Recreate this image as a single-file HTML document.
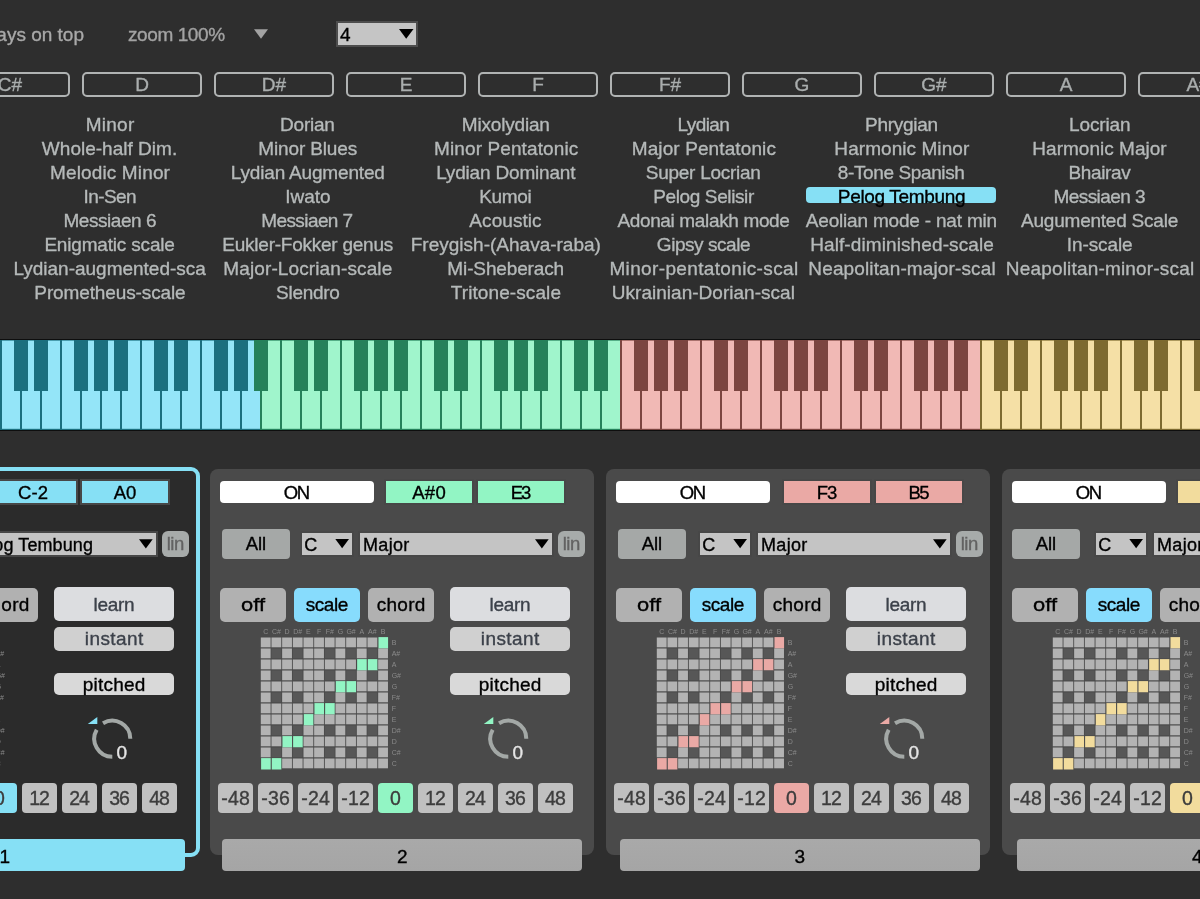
<!DOCTYPE html><html><head><meta charset="utf-8"><style>
html,body{margin:0;padding:0;width:1200px;height:899px;overflow:hidden;background:#2e2e2e;position:relative;font-family:"Liberation Sans",sans-serif;}
.t{position:absolute;white-space:nowrap;-webkit-text-stroke:0.35px currentColor;}
.r{position:absolute;box-sizing:border-box;}
svg{position:absolute;left:0;top:0;}
</style></head><body><div style="position:absolute;left:0;top:0;width:1200px;height:899px;overflow:hidden;will-change:transform;">
<div class="t" style="left:-516.00px;top:22.52px;width:600px;text-align:right;font-size:19px;line-height:23px;color:#a9a9a9;">ays on top</div>
<div class="t" style="left:128.00px;top:23.22px;width:600px;text-align:left;font-size:19px;line-height:23px;color:#a3a3a3;letter-spacing:-0.406px;">zoom 100%</div>
<svg width="1200" height="60" style="left:0;top:0"><polygon points="254,29.2 268,29.2 261,38.8" fill="#a3a3a3"/></svg>
<div class="r" style="left:336px;top:21px;width:82px;height:26px;background:#4d4d4d;border-radius:0px;"></div>
<div class="r" style="left:338px;top:23px;width:78px;height:22px;background:#c5c5c5;border-radius:0px;"></div>
<div class="t" style="left:340.00px;top:22.92px;width:600px;text-align:left;font-size:19px;line-height:23px;color:#000;">4</div>
<svg width="1200" height="60" style="left:0;top:0"><polygon points="399,29 413.5,29 406.2,38.7" fill="#000"/></svg>
<div class="r" style="left:-50px;top:72px;width:120px;height:25px;background:transparent;border-radius:5px;border:2px solid #b0b3b3;"></div>
<div class="t" style="left:-190.00px;top:72.82px;width:400px;text-align:center;font-size:19px;line-height:23px;color:#aaaeae;">C#</div>
<div class="r" style="left:82px;top:72px;width:120px;height:25px;background:transparent;border-radius:5px;border:2px solid #b0b3b3;"></div>
<div class="t" style="left:-58.00px;top:72.82px;width:400px;text-align:center;font-size:19px;line-height:23px;color:#aaaeae;">D</div>
<div class="r" style="left:214px;top:72px;width:120px;height:25px;background:transparent;border-radius:5px;border:2px solid #b0b3b3;"></div>
<div class="t" style="left:74.00px;top:72.82px;width:400px;text-align:center;font-size:19px;line-height:23px;color:#aaaeae;">D#</div>
<div class="r" style="left:346px;top:72px;width:120px;height:25px;background:transparent;border-radius:5px;border:2px solid #b0b3b3;"></div>
<div class="t" style="left:206.00px;top:72.82px;width:400px;text-align:center;font-size:19px;line-height:23px;color:#aaaeae;">E</div>
<div class="r" style="left:478px;top:72px;width:120px;height:25px;background:transparent;border-radius:5px;border:2px solid #b0b3b3;"></div>
<div class="t" style="left:338.00px;top:72.82px;width:400px;text-align:center;font-size:19px;line-height:23px;color:#aaaeae;">F</div>
<div class="r" style="left:610px;top:72px;width:120px;height:25px;background:transparent;border-radius:5px;border:2px solid #b0b3b3;"></div>
<div class="t" style="left:470.00px;top:72.82px;width:400px;text-align:center;font-size:19px;line-height:23px;color:#aaaeae;">F#</div>
<div class="r" style="left:742px;top:72px;width:120px;height:25px;background:transparent;border-radius:5px;border:2px solid #b0b3b3;"></div>
<div class="t" style="left:602.00px;top:72.82px;width:400px;text-align:center;font-size:19px;line-height:23px;color:#aaaeae;">G</div>
<div class="r" style="left:874px;top:72px;width:120px;height:25px;background:transparent;border-radius:5px;border:2px solid #b0b3b3;"></div>
<div class="t" style="left:734.00px;top:72.82px;width:400px;text-align:center;font-size:19px;line-height:23px;color:#aaaeae;">G#</div>
<div class="r" style="left:1006px;top:72px;width:120px;height:25px;background:transparent;border-radius:5px;border:2px solid #b0b3b3;"></div>
<div class="t" style="left:866.00px;top:72.82px;width:400px;text-align:center;font-size:19px;line-height:23px;color:#aaaeae;">A</div>
<div class="r" style="left:1138px;top:72px;width:120px;height:25px;background:transparent;border-radius:5px;border:2px solid #b0b3b3;"></div>
<div class="t" style="left:998.00px;top:72.82px;width:400px;text-align:center;font-size:19px;line-height:23px;color:#aaaeae;">A#</div>
<div class="r" style="left:806px;top:187px;width:190px;height:16px;background:#86e0f5;border-radius:4px;"></div>
<div class="t" style="left:-89.89px;top:112.92px;width:400px;text-align:center;font-size:19px;line-height:23px;color:#b5b9b9;letter-spacing:0.225px;">Minor</div>
<div class="t" style="left:-90.49px;top:136.92px;width:400px;text-align:center;font-size:19px;line-height:23px;color:#b5b9b9;letter-spacing:0.011px;">Whole-half Dim.</div>
<div class="t" style="left:-89.94px;top:160.92px;width:400px;text-align:center;font-size:19px;line-height:23px;color:#b5b9b9;letter-spacing:0.129px;">Melodic Minor</div>
<div class="t" style="left:-90.28px;top:184.92px;width:400px;text-align:center;font-size:19px;line-height:23px;color:#b5b9b9;letter-spacing:-0.560px;">In-Sen</div>
<div class="t" style="left:-90.22px;top:208.92px;width:400px;text-align:center;font-size:19px;line-height:23px;color:#b5b9b9;letter-spacing:-0.450px;">Messiaen 6</div>
<div class="t" style="left:-90.44px;top:232.92px;width:400px;text-align:center;font-size:19px;line-height:23px;color:#b5b9b9;letter-spacing:-0.179px;">Enigmatic scale</div>
<div class="t" style="left:-90.36px;top:256.92px;width:400px;text-align:center;font-size:19px;line-height:23px;color:#b5b9b9;letter-spacing:-0.013px;">Lydian-augmented-sca</div>
<div class="t" style="left:-90.06px;top:280.92px;width:400px;text-align:center;font-size:19px;line-height:23px;color:#b5b9b9;letter-spacing:-0.120px;">Prometheus-scale</div>
<div class="t" style="left:107.38px;top:112.92px;width:400px;text-align:center;font-size:19px;line-height:23px;color:#b5b9b9;letter-spacing:-0.240px;">Dorian</div>
<div class="t" style="left:107.73px;top:136.92px;width:400px;text-align:center;font-size:19px;line-height:23px;color:#b5b9b9;letter-spacing:-0.145px;">Minor Blues</div>
<div class="t" style="left:107.76px;top:160.92px;width:400px;text-align:center;font-size:19px;line-height:23px;color:#b5b9b9;letter-spacing:-0.177px;">Lydian Augmented</div>
<div class="t" style="left:107.85px;top:184.92px;width:400px;text-align:center;font-size:19px;line-height:23px;color:#b5b9b9;letter-spacing:-0.000px;">Iwato</div>
<div class="t" style="left:106.86px;top:208.92px;width:400px;text-align:center;font-size:19px;line-height:23px;color:#b5b9b9;letter-spacing:-0.572px;">Messiaen 7</div>
<div class="t" style="left:107.68px;top:232.92px;width:400px;text-align:center;font-size:19px;line-height:23px;color:#b5b9b9;letter-spacing:-0.247px;">Eukler-Fokker genus</div>
<div class="t" style="left:107.86px;top:256.92px;width:400px;text-align:center;font-size:19px;line-height:23px;color:#b5b9b9;letter-spacing:0.114px;">Major-Locrian-scale</div>
<div class="t" style="left:107.86px;top:280.92px;width:400px;text-align:center;font-size:19px;line-height:23px;color:#b5b9b9;letter-spacing:-0.283px;">Slendro</div>
<div class="t" style="left:305.76px;top:112.92px;width:400px;text-align:center;font-size:19px;line-height:23px;color:#b5b9b9;letter-spacing:-0.183px;">Mixolydian</div>
<div class="t" style="left:306.20px;top:136.92px;width:400px;text-align:center;font-size:19px;line-height:23px;color:#b5b9b9;letter-spacing:0.107px;">Minor Pentatonic</div>
<div class="t" style="left:305.76px;top:160.92px;width:400px;text-align:center;font-size:19px;line-height:23px;color:#b5b9b9;letter-spacing:-0.179px;">Lydian Dominant</div>
<div class="t" style="left:305.31px;top:184.92px;width:400px;text-align:center;font-size:19px;line-height:23px;color:#b5b9b9;letter-spacing:-0.387px;">Kumoi</div>
<div class="t" style="left:305.53px;top:208.92px;width:400px;text-align:center;font-size:19px;line-height:23px;color:#b5b9b9;letter-spacing:0.064px;">Acoustic</div>
<div class="t" style="left:305.85px;top:232.92px;width:400px;text-align:center;font-size:19px;line-height:23px;color:#b5b9b9;letter-spacing:0.005px;">Freygish-(Ahava-raba)</div>
<div class="t" style="left:305.73px;top:256.92px;width:400px;text-align:center;font-size:19px;line-height:23px;color:#b5b9b9;letter-spacing:-0.132px;">Mi-Sheberach</div>
<div class="t" style="left:305.90px;top:280.92px;width:400px;text-align:center;font-size:19px;line-height:23px;color:#b5b9b9;letter-spacing:0.092px;">Tritone-scale</div>
<div class="t" style="left:503.38px;top:112.92px;width:400px;text-align:center;font-size:19px;line-height:23px;color:#b5b9b9;letter-spacing:-0.550px;">Lydian</div>
<div class="t" style="left:503.90px;top:136.92px;width:400px;text-align:center;font-size:19px;line-height:23px;color:#b5b9b9;letter-spacing:0.107px;">Major Pentatonic</div>
<div class="t" style="left:503.22px;top:160.92px;width:400px;text-align:center;font-size:19px;line-height:23px;color:#b5b9b9;letter-spacing:-0.263px;">Super Locrian</div>
<div class="t" style="left:503.60px;top:184.92px;width:400px;text-align:center;font-size:19px;line-height:23px;color:#b5b9b9;letter-spacing:-0.392px;">Pelog Selisir</div>
<div class="t" style="left:503.47px;top:208.92px;width:400px;text-align:center;font-size:19px;line-height:23px;color:#b5b9b9;letter-spacing:-0.353px;">Adonai malakh mode</div>
<div class="t" style="left:503.48px;top:232.92px;width:400px;text-align:center;font-size:19px;line-height:23px;color:#b5b9b9;letter-spacing:-0.445px;">Gipsy scale</div>
<div class="t" style="left:503.98px;top:256.92px;width:400px;text-align:center;font-size:19px;line-height:23px;color:#b5b9b9;letter-spacing:0.353px;">Minor-pentatonic-scal</div>
<div class="t" style="left:503.36px;top:280.92px;width:400px;text-align:center;font-size:19px;line-height:23px;color:#b5b9b9;letter-spacing:0.017px;">Ukrainian-Dorian-scal</div>
<div class="t" style="left:701.51px;top:112.92px;width:400px;text-align:center;font-size:19px;line-height:23px;color:#b5b9b9;letter-spacing:-0.271px;">Phrygian</div>
<div class="t" style="left:701.83px;top:136.92px;width:400px;text-align:center;font-size:19px;line-height:23px;color:#b5b9b9;letter-spacing:0.062px;">Harmonic Minor</div>
<div class="t" style="left:701.16px;top:160.92px;width:400px;text-align:center;font-size:19px;line-height:23px;color:#b5b9b9;letter-spacing:-0.377px;">8-Tone Spanish</div>
<div class="t" style="left:701.54px;top:184.92px;width:400px;text-align:center;font-size:19px;line-height:23px;color:#000;letter-spacing:-0.329px;">Pelog Tembung</div>
<div class="t" style="left:701.40px;top:208.92px;width:400px;text-align:center;font-size:19px;line-height:23px;color:#b5b9b9;letter-spacing:-0.195px;">Aeolian mode - nat min</div>
<div class="t" style="left:702.05px;top:232.92px;width:400px;text-align:center;font-size:19px;line-height:23px;color:#b5b9b9;letter-spacing:0.103px;">Half-diminished-scale</div>
<div class="t" style="left:702.06px;top:256.92px;width:400px;text-align:center;font-size:19px;line-height:23px;color:#b5b9b9;letter-spacing:0.123px;">Neapolitan-major-scal</div>
<div class="t" style="left:899.79px;top:112.92px;width:400px;text-align:center;font-size:19px;line-height:23px;color:#b5b9b9;letter-spacing:-0.125px;">Locrian</div>
<div class="t" style="left:899.51px;top:136.92px;width:400px;text-align:center;font-size:19px;line-height:23px;color:#b5b9b9;letter-spacing:0.015px;">Harmonic Major</div>
<div class="t" style="left:899.48px;top:160.92px;width:400px;text-align:center;font-size:19px;line-height:23px;color:#b5b9b9;letter-spacing:-0.333px;">Bhairav</div>
<div class="t" style="left:899.22px;top:184.92px;width:400px;text-align:center;font-size:19px;line-height:23px;color:#b5b9b9;letter-spacing:-0.561px;">Messiaen 3</div>
<div class="t" style="left:899.54px;top:208.92px;width:400px;text-align:center;font-size:19px;line-height:23px;color:#b5b9b9;letter-spacing:-0.227px;">Augumented Scale</div>
<div class="t" style="left:899.65px;top:232.92px;width:400px;text-align:center;font-size:19px;line-height:23px;color:#b5b9b9;letter-spacing:-0.100px;">In-scale</div>
<div class="t" style="left:900.09px;top:256.92px;width:400px;text-align:center;font-size:19px;line-height:23px;color:#b5b9b9;letter-spacing:0.182px;">Neapolitan-minor-scal</div>
<svg width="1200" height="899" style="left:0;top:0"><rect x="0" y="339" width="1200" height="92" fill="#0e0e0e"/><rect x="0" y="340" width="20" height="90" fill="#1b6f7f"/><rect x="2" y="340.6" width="18" height="88.2" fill="#94e5f8"/><rect x="20" y="340" width="20" height="90" fill="#1b6f7f"/><rect x="22" y="340.6" width="18" height="88.2" fill="#94e5f8"/><rect x="40" y="340" width="20" height="90" fill="#1b6f7f"/><rect x="42" y="340.6" width="18" height="88.2" fill="#94e5f8"/><rect x="60" y="340" width="20" height="90" fill="#1b6f7f"/><rect x="62" y="340.6" width="18" height="88.2" fill="#94e5f8"/><rect x="80" y="340" width="20" height="90" fill="#1b6f7f"/><rect x="82" y="340.6" width="18" height="88.2" fill="#94e5f8"/><rect x="100" y="340" width="20" height="90" fill="#1b6f7f"/><rect x="102" y="340.6" width="18" height="88.2" fill="#94e5f8"/><rect x="120" y="340" width="20" height="90" fill="#1b6f7f"/><rect x="122" y="340.6" width="18" height="88.2" fill="#94e5f8"/><rect x="140" y="340" width="20" height="90" fill="#1b6f7f"/><rect x="142" y="340.6" width="18" height="88.2" fill="#94e5f8"/><rect x="160" y="340" width="20" height="90" fill="#1b6f7f"/><rect x="162" y="340.6" width="18" height="88.2" fill="#94e5f8"/><rect x="180" y="340" width="20" height="90" fill="#1b6f7f"/><rect x="182" y="340.6" width="18" height="88.2" fill="#94e5f8"/><rect x="200" y="340" width="20" height="90" fill="#1b6f7f"/><rect x="202" y="340.6" width="18" height="88.2" fill="#94e5f8"/><rect x="220" y="340" width="20" height="90" fill="#1b6f7f"/><rect x="222" y="340.6" width="18" height="88.2" fill="#94e5f8"/><rect x="240" y="340" width="20" height="90" fill="#1b6f7f"/><rect x="242" y="340.6" width="18" height="88.2" fill="#94e5f8"/><rect x="260" y="340" width="20" height="90" fill="#25815a"/><rect x="262" y="340.6" width="18" height="88.2" fill="#a0f5cc"/><rect x="280" y="340" width="20" height="90" fill="#25815a"/><rect x="282" y="340.6" width="18" height="88.2" fill="#a0f5cc"/><rect x="300" y="340" width="20" height="90" fill="#25815a"/><rect x="302" y="340.6" width="18" height="88.2" fill="#a0f5cc"/><rect x="320" y="340" width="20" height="90" fill="#25815a"/><rect x="322" y="340.6" width="18" height="88.2" fill="#a0f5cc"/><rect x="340" y="340" width="20" height="90" fill="#25815a"/><rect x="342" y="340.6" width="18" height="88.2" fill="#a0f5cc"/><rect x="360" y="340" width="20" height="90" fill="#25815a"/><rect x="362" y="340.6" width="18" height="88.2" fill="#a0f5cc"/><rect x="380" y="340" width="20" height="90" fill="#25815a"/><rect x="382" y="340.6" width="18" height="88.2" fill="#a0f5cc"/><rect x="400" y="340" width="20" height="90" fill="#25815a"/><rect x="402" y="340.6" width="18" height="88.2" fill="#a0f5cc"/><rect x="420" y="340" width="20" height="90" fill="#25815a"/><rect x="422" y="340.6" width="18" height="88.2" fill="#a0f5cc"/><rect x="440" y="340" width="20" height="90" fill="#25815a"/><rect x="442" y="340.6" width="18" height="88.2" fill="#a0f5cc"/><rect x="460" y="340" width="20" height="90" fill="#25815a"/><rect x="462" y="340.6" width="18" height="88.2" fill="#a0f5cc"/><rect x="480" y="340" width="20" height="90" fill="#25815a"/><rect x="482" y="340.6" width="18" height="88.2" fill="#a0f5cc"/><rect x="500" y="340" width="20" height="90" fill="#25815a"/><rect x="502" y="340.6" width="18" height="88.2" fill="#a0f5cc"/><rect x="520" y="340" width="20" height="90" fill="#25815a"/><rect x="522" y="340.6" width="18" height="88.2" fill="#a0f5cc"/><rect x="540" y="340" width="20" height="90" fill="#25815a"/><rect x="542" y="340.6" width="18" height="88.2" fill="#a0f5cc"/><rect x="560" y="340" width="20" height="90" fill="#25815a"/><rect x="562" y="340.6" width="18" height="88.2" fill="#a0f5cc"/><rect x="580" y="340" width="20" height="90" fill="#25815a"/><rect x="582" y="340.6" width="18" height="88.2" fill="#a0f5cc"/><rect x="600" y="340" width="20" height="90" fill="#25815a"/><rect x="602" y="340.6" width="18" height="88.2" fill="#a0f5cc"/><rect x="620" y="340" width="20" height="90" fill="#7c4540"/><rect x="622" y="340.6" width="18" height="88.2" fill="#f1b9b5"/><rect x="640" y="340" width="20" height="90" fill="#7c4540"/><rect x="642" y="340.6" width="18" height="88.2" fill="#f1b9b5"/><rect x="660" y="340" width="20" height="90" fill="#7c4540"/><rect x="662" y="340.6" width="18" height="88.2" fill="#f1b9b5"/><rect x="680" y="340" width="20" height="90" fill="#7c4540"/><rect x="682" y="340.6" width="18" height="88.2" fill="#f1b9b5"/><rect x="700" y="340" width="20" height="90" fill="#7c4540"/><rect x="702" y="340.6" width="18" height="88.2" fill="#f1b9b5"/><rect x="720" y="340" width="20" height="90" fill="#7c4540"/><rect x="722" y="340.6" width="18" height="88.2" fill="#f1b9b5"/><rect x="740" y="340" width="20" height="90" fill="#7c4540"/><rect x="742" y="340.6" width="18" height="88.2" fill="#f1b9b5"/><rect x="760" y="340" width="20" height="90" fill="#7c4540"/><rect x="762" y="340.6" width="18" height="88.2" fill="#f1b9b5"/><rect x="780" y="340" width="20" height="90" fill="#7c4540"/><rect x="782" y="340.6" width="18" height="88.2" fill="#f1b9b5"/><rect x="800" y="340" width="20" height="90" fill="#7c4540"/><rect x="802" y="340.6" width="18" height="88.2" fill="#f1b9b5"/><rect x="820" y="340" width="20" height="90" fill="#7c4540"/><rect x="822" y="340.6" width="18" height="88.2" fill="#f1b9b5"/><rect x="840" y="340" width="20" height="90" fill="#7c4540"/><rect x="842" y="340.6" width="18" height="88.2" fill="#f1b9b5"/><rect x="860" y="340" width="20" height="90" fill="#7c4540"/><rect x="862" y="340.6" width="18" height="88.2" fill="#f1b9b5"/><rect x="880" y="340" width="20" height="90" fill="#7c4540"/><rect x="882" y="340.6" width="18" height="88.2" fill="#f1b9b5"/><rect x="900" y="340" width="20" height="90" fill="#7c4540"/><rect x="902" y="340.6" width="18" height="88.2" fill="#f1b9b5"/><rect x="920" y="340" width="20" height="90" fill="#7c4540"/><rect x="922" y="340.6" width="18" height="88.2" fill="#f1b9b5"/><rect x="940" y="340" width="20" height="90" fill="#7c4540"/><rect x="942" y="340.6" width="18" height="88.2" fill="#f1b9b5"/><rect x="960" y="340" width="20" height="90" fill="#7c4540"/><rect x="962" y="340.6" width="18" height="88.2" fill="#f1b9b5"/><rect x="980" y="340" width="20" height="90" fill="#7d6a30"/><rect x="982" y="340.6" width="18" height="88.2" fill="#f5e0a6"/><rect x="1000" y="340" width="20" height="90" fill="#7d6a30"/><rect x="1002" y="340.6" width="18" height="88.2" fill="#f5e0a6"/><rect x="1020" y="340" width="20" height="90" fill="#7d6a30"/><rect x="1022" y="340.6" width="18" height="88.2" fill="#f5e0a6"/><rect x="1040" y="340" width="20" height="90" fill="#7d6a30"/><rect x="1042" y="340.6" width="18" height="88.2" fill="#f5e0a6"/><rect x="1060" y="340" width="20" height="90" fill="#7d6a30"/><rect x="1062" y="340.6" width="18" height="88.2" fill="#f5e0a6"/><rect x="1080" y="340" width="20" height="90" fill="#7d6a30"/><rect x="1082" y="340.6" width="18" height="88.2" fill="#f5e0a6"/><rect x="1100" y="340" width="20" height="90" fill="#7d6a30"/><rect x="1102" y="340.6" width="18" height="88.2" fill="#f5e0a6"/><rect x="1120" y="340" width="20" height="90" fill="#7d6a30"/><rect x="1122" y="340.6" width="18" height="88.2" fill="#f5e0a6"/><rect x="1140" y="340" width="20" height="90" fill="#7d6a30"/><rect x="1142" y="340.6" width="18" height="88.2" fill="#f5e0a6"/><rect x="1160" y="340" width="20" height="90" fill="#7d6a30"/><rect x="1162" y="340.6" width="18" height="88.2" fill="#f5e0a6"/><rect x="1180" y="340" width="20" height="90" fill="#7d6a30"/><rect x="1182" y="340.6" width="18" height="88.2" fill="#f5e0a6"/><rect x="1200" y="340" width="20" height="90" fill="#7d6a30"/><rect x="1202" y="340.6" width="18" height="88.2" fill="#f5e0a6"/><rect x="14" y="340" width="14" height="51" fill="#1b6f7f"/><rect x="34" y="340" width="14" height="51" fill="#1b6f7f"/><rect x="74" y="340" width="14" height="51" fill="#1b6f7f"/><rect x="94" y="340" width="14" height="51" fill="#1b6f7f"/><rect x="114" y="340" width="14" height="51" fill="#1b6f7f"/><rect x="154" y="340" width="14" height="51" fill="#1b6f7f"/><rect x="174" y="340" width="14" height="51" fill="#1b6f7f"/><rect x="214" y="340" width="14" height="51" fill="#1b6f7f"/><rect x="234" y="340" width="14" height="51" fill="#1b6f7f"/><rect x="254" y="340" width="14" height="51" fill="#25815a"/><rect x="294" y="340" width="14" height="51" fill="#25815a"/><rect x="314" y="340" width="14" height="51" fill="#25815a"/><rect x="354" y="340" width="14" height="51" fill="#25815a"/><rect x="374" y="340" width="14" height="51" fill="#25815a"/><rect x="394" y="340" width="14" height="51" fill="#25815a"/><rect x="434" y="340" width="14" height="51" fill="#25815a"/><rect x="454" y="340" width="14" height="51" fill="#25815a"/><rect x="494" y="340" width="14" height="51" fill="#25815a"/><rect x="514" y="340" width="14" height="51" fill="#25815a"/><rect x="534" y="340" width="14" height="51" fill="#25815a"/><rect x="574" y="340" width="14" height="51" fill="#25815a"/><rect x="594" y="340" width="14" height="51" fill="#25815a"/><rect x="634" y="340" width="14" height="51" fill="#7c4540"/><rect x="654" y="340" width="14" height="51" fill="#7c4540"/><rect x="674" y="340" width="14" height="51" fill="#7c4540"/><rect x="714" y="340" width="14" height="51" fill="#7c4540"/><rect x="734" y="340" width="14" height="51" fill="#7c4540"/><rect x="774" y="340" width="14" height="51" fill="#7c4540"/><rect x="794" y="340" width="14" height="51" fill="#7c4540"/><rect x="814" y="340" width="14" height="51" fill="#7c4540"/><rect x="854" y="340" width="14" height="51" fill="#7c4540"/><rect x="874" y="340" width="14" height="51" fill="#7c4540"/><rect x="914" y="340" width="14" height="51" fill="#7c4540"/><rect x="934" y="340" width="14" height="51" fill="#7c4540"/><rect x="954" y="340" width="14" height="51" fill="#7c4540"/><rect x="994" y="340" width="14" height="51" fill="#7d6a30"/><rect x="1014" y="340" width="14" height="51" fill="#7d6a30"/><rect x="1054" y="340" width="14" height="51" fill="#7d6a30"/><rect x="1074" y="340" width="14" height="51" fill="#7d6a30"/><rect x="1094" y="340" width="14" height="51" fill="#7d6a30"/><rect x="1134" y="340" width="14" height="51" fill="#7d6a30"/><rect x="1154" y="340" width="14" height="51" fill="#7d6a30"/><rect x="1194" y="340" width="14" height="51" fill="#7d6a30"/><rect x="1214" y="340" width="14" height="51" fill="#7d6a30"/></svg>
<div class="r" style="left:-188px;top:467px;width:388px;height:390px;background:#2b2b2b;border-radius:9px;border:4px solid #86e0f5;"></div>
<div class="r" style="left:-12px;top:479px;width:90px;height:26px;background:#474747;border-radius:0px;"></div>
<div class="r" style="left:-10px;top:481px;width:86px;height:22px;background:#86e0f5;border-radius:0px;"></div>
<div class="t" style="left:-166.89px;top:481.79px;width:400px;text-align:center;font-size:18.5px;line-height:22px;color:#000;letter-spacing:0.225px;">C-2</div>
<div class="r" style="left:80px;top:479px;width:90px;height:26px;background:#474747;border-radius:0px;"></div>
<div class="r" style="left:82px;top:481px;width:86px;height:22px;background:#86e0f5;border-radius:0px;"></div>
<div class="t" style="left:-75.12px;top:481.79px;width:400px;text-align:center;font-size:18.5px;line-height:22px;color:#000;letter-spacing:-0.250px;">A0</div>
<div class="r" style="left:-174px;top:529px;width:68px;height:30px;background:#a5a8a7;border-radius:4px;"></div>
<div class="t" style="left:-340.05px;top:533.39px;width:400px;text-align:center;font-size:18.5px;line-height:22px;color:#000;letter-spacing:-0.100px;">All</div>
<div class="r" style="left:-96px;top:531px;width:54px;height:26px;background:#474747;border-radius:0px;"></div>
<div class="r" style="left:-94px;top:533px;width:50px;height:22px;background:#c4c4c4;border-radius:0px;"></div>
<div class="t" style="left:-91.80px;top:533.56px;width:600px;text-align:left;font-size:18px;line-height:22px;color:#000;">C</div>
<div class="r" style="left:-38px;top:531px;width:196px;height:26px;background:#474747;border-radius:0px;"></div>
<div class="r" style="left:-36px;top:533px;width:192px;height:22px;background:#c4c4c4;border-radius:0px;"></div>
<div class="t" style="left:-33.00px;top:533.56px;width:600px;text-align:left;font-size:18px;line-height:22px;color:#000;letter-spacing:0.1px;">Pelog Tembung</div>
<svg width="400" height="30" style="left:-186px;top:530px"><polygon points="125.3,9 139,9 132.15,18.3" fill="#000"/><polygon points="325,9.3 338.7,9.3 331.85,18.5" fill="#000"/></svg>
<div class="r" style="left:162px;top:531px;width:27px;height:26px;background:#a7abaa;border-radius:6px;"></div>
<div class="t" style="left:-24.75px;top:533.29px;width:400px;text-align:center;font-size:18.5px;line-height:22px;color:#626262;letter-spacing:-0.500px;">lin</div>
<div class="r" style="left:-176px;top:588px;width:66px;height:34px;background:#b1b1b1;border-radius:5px;"></div>
<div class="t" style="left:-343.00px;top:592.92px;width:400px;text-align:center;font-size:19px;line-height:23px;color:#000;transform:scaleX(1.152);">off</div>
<div class="r" style="left:-102px;top:588px;width:66px;height:34px;background:#87dcfd;border-radius:5px;"></div>
<div class="t" style="left:-269.21px;top:592.92px;width:400px;text-align:center;font-size:19px;line-height:23px;color:#000;letter-spacing:-0.412px;">scale</div>
<div class="r" style="left:-28px;top:588px;width:66px;height:34px;background:#b1b1b1;border-radius:5px;"></div>
<div class="t" style="left:-194.85px;top:592.92px;width:400px;text-align:center;font-size:19px;line-height:23px;color:#000;letter-spacing:0.300px;">chord</div>
<div class="r" style="left:54px;top:587px;width:120px;height:34px;background:#dcdde0;border-radius:5px;"></div>
<div class="t" style="left:-86.16px;top:592.92px;width:400px;text-align:center;font-size:19px;line-height:23px;color:#3c414a;letter-spacing:-0.312px;">learn</div>
<div class="r" style="left:54px;top:627px;width:120px;height:24px;background:#d0d0d0;border-radius:5px;"></div>
<div class="t" style="left:-85.80px;top:626.62px;width:400px;text-align:center;font-size:19px;line-height:23px;color:#3c414a;letter-spacing:0.400px;">instant</div>
<div class="r" style="left:54px;top:673px;width:120px;height:22px;background:#d9d9d9;border-radius:5px;"></div>
<div class="t" style="left:-85.88px;top:672.72px;width:400px;text-align:center;font-size:19px;line-height:23px;color:#000;letter-spacing:0.242px;">pitched</div>
<svg width="400" height="160" style="left:-186px;top:620px"><text x="55.70" y="13.6" font-size="7" fill="#8a8a8a" text-anchor="middle" font-family="Liberation Sans">C</text><text x="66.37" y="13.6" font-size="7" fill="#8a8a8a" text-anchor="middle" font-family="Liberation Sans">C#</text><text x="77.04" y="13.6" font-size="7" fill="#8a8a8a" text-anchor="middle" font-family="Liberation Sans">D</text><text x="87.71" y="13.6" font-size="7" fill="#8a8a8a" text-anchor="middle" font-family="Liberation Sans">D#</text><text x="98.38" y="13.6" font-size="7" fill="#8a8a8a" text-anchor="middle" font-family="Liberation Sans">E</text><text x="109.05" y="13.6" font-size="7" fill="#8a8a8a" text-anchor="middle" font-family="Liberation Sans">F</text><text x="119.72" y="13.6" font-size="7" fill="#8a8a8a" text-anchor="middle" font-family="Liberation Sans">F#</text><text x="130.39" y="13.6" font-size="7" fill="#8a8a8a" text-anchor="middle" font-family="Liberation Sans">G</text><text x="141.06" y="13.6" font-size="7" fill="#8a8a8a" text-anchor="middle" font-family="Liberation Sans">G#</text><text x="151.73" y="13.6" font-size="7" fill="#8a8a8a" text-anchor="middle" font-family="Liberation Sans">A</text><text x="162.40" y="13.6" font-size="7" fill="#8a8a8a" text-anchor="middle" font-family="Liberation Sans">A#</text><text x="173.07" y="13.6" font-size="7" fill="#8a8a8a" text-anchor="middle" font-family="Liberation Sans">B</text><text x="181.64" y="24.90" font-size="7" fill="#8a8a8a" font-family="Liberation Sans">B</text><rect x="50.80" y="17.50" width="9.8" height="9.8" fill="#b3b3b3"/><rect x="61.47" y="17.50" width="9.8" height="9.8" fill="#b3b3b3"/><rect x="72.14" y="17.50" width="9.8" height="9.8" fill="#b3b3b3"/><rect x="82.81" y="17.50" width="9.8" height="9.8" fill="#b3b3b3"/><rect x="93.48" y="17.50" width="9.8" height="9.8" fill="#b3b3b3"/><rect x="104.15" y="17.50" width="9.8" height="9.8" fill="#b3b3b3"/><rect x="114.82" y="17.50" width="9.8" height="9.8" fill="#b3b3b3"/><rect x="125.49" y="17.50" width="9.8" height="9.8" fill="#b3b3b3"/><rect x="136.16" y="17.50" width="9.8" height="9.8" fill="#b3b3b3"/><rect x="146.83" y="17.50" width="9.8" height="9.8" fill="#b3b3b3"/><rect x="157.50" y="17.50" width="9.8" height="9.8" fill="#b3b3b3"/><rect x="168.47" y="17.10" width="9.60" height="11.40" fill="#86e0f5"/><text x="181.64" y="35.90" font-size="7" fill="#8a8a8a" font-family="Liberation Sans">A#</text><rect x="50.80" y="28.50" width="9.8" height="9.8" fill="#b3b3b3"/><rect x="61.47" y="28.50" width="9.8" height="9.8" fill="#575757"/><rect x="72.14" y="28.50" width="9.8" height="9.8" fill="#b3b3b3"/><rect x="82.81" y="28.50" width="9.8" height="9.8" fill="#575757"/><rect x="93.48" y="28.50" width="9.8" height="9.8" fill="#b3b3b3"/><rect x="104.15" y="28.50" width="9.8" height="9.8" fill="#b3b3b3"/><rect x="114.82" y="28.50" width="9.8" height="9.8" fill="#575757"/><rect x="125.49" y="28.50" width="9.8" height="9.8" fill="#b3b3b3"/><rect x="136.16" y="28.50" width="9.8" height="9.8" fill="#575757"/><rect x="146.83" y="28.50" width="9.8" height="9.8" fill="#b3b3b3"/><rect x="157.50" y="28.50" width="9.8" height="9.8" fill="#575757"/><rect x="168.17" y="28.50" width="9.8" height="9.8" fill="#b3b3b3"/><text x="181.64" y="46.90" font-size="7" fill="#8a8a8a" font-family="Liberation Sans">A</text><rect x="50.80" y="39.50" width="9.8" height="9.8" fill="#b3b3b3"/><rect x="61.47" y="39.50" width="9.8" height="9.8" fill="#b3b3b3"/><rect x="72.14" y="39.50" width="9.8" height="9.8" fill="#b3b3b3"/><rect x="82.81" y="39.50" width="9.8" height="9.8" fill="#b3b3b3"/><rect x="93.48" y="39.50" width="9.8" height="9.8" fill="#b3b3b3"/><rect x="104.15" y="39.50" width="9.8" height="9.8" fill="#b3b3b3"/><rect x="114.82" y="39.50" width="9.8" height="9.8" fill="#b3b3b3"/><rect x="125.49" y="39.50" width="9.8" height="9.8" fill="#b3b3b3"/><rect x="136.16" y="39.50" width="9.8" height="9.8" fill="#b3b3b3"/><rect x="147.13" y="39.10" width="9.60" height="11.40" fill="#86e0f5"/><rect x="157.80" y="39.10" width="9.60" height="11.40" fill="#86e0f5"/><rect x="168.17" y="39.50" width="9.8" height="9.8" fill="#b3b3b3"/><text x="181.64" y="57.90" font-size="7" fill="#8a8a8a" font-family="Liberation Sans">G#</text><rect x="50.80" y="50.50" width="9.8" height="9.8" fill="#b3b3b3"/><rect x="61.47" y="50.50" width="9.8" height="9.8" fill="#575757"/><rect x="72.14" y="50.50" width="9.8" height="9.8" fill="#b3b3b3"/><rect x="82.81" y="50.50" width="9.8" height="9.8" fill="#575757"/><rect x="93.48" y="50.50" width="9.8" height="9.8" fill="#b3b3b3"/><rect x="104.15" y="50.50" width="9.8" height="9.8" fill="#b3b3b3"/><rect x="114.82" y="50.50" width="9.8" height="9.8" fill="#575757"/><rect x="125.49" y="50.50" width="9.8" height="9.8" fill="#b3b3b3"/><rect x="136.16" y="50.50" width="9.8" height="9.8" fill="#575757"/><rect x="146.83" y="50.50" width="9.8" height="9.8" fill="#b3b3b3"/><rect x="157.50" y="50.50" width="9.8" height="9.8" fill="#575757"/><rect x="168.17" y="50.50" width="9.8" height="9.8" fill="#b3b3b3"/><text x="181.64" y="68.90" font-size="7" fill="#8a8a8a" font-family="Liberation Sans">G</text><rect x="50.80" y="61.50" width="9.8" height="9.8" fill="#b3b3b3"/><rect x="61.47" y="61.50" width="9.8" height="9.8" fill="#b3b3b3"/><rect x="72.14" y="61.50" width="9.8" height="9.8" fill="#b3b3b3"/><rect x="82.81" y="61.50" width="9.8" height="9.8" fill="#b3b3b3"/><rect x="93.48" y="61.50" width="9.8" height="9.8" fill="#b3b3b3"/><rect x="104.15" y="61.50" width="9.8" height="9.8" fill="#b3b3b3"/><rect x="114.82" y="61.50" width="9.8" height="9.8" fill="#b3b3b3"/><rect x="125.79" y="61.10" width="9.60" height="11.40" fill="#86e0f5"/><rect x="136.46" y="61.10" width="9.60" height="11.40" fill="#86e0f5"/><rect x="146.83" y="61.50" width="9.8" height="9.8" fill="#b3b3b3"/><rect x="157.50" y="61.50" width="9.8" height="9.8" fill="#b3b3b3"/><rect x="168.17" y="61.50" width="9.8" height="9.8" fill="#b3b3b3"/><text x="181.64" y="79.90" font-size="7" fill="#8a8a8a" font-family="Liberation Sans">F#</text><rect x="50.80" y="72.50" width="9.8" height="9.8" fill="#b3b3b3"/><rect x="61.47" y="72.50" width="9.8" height="9.8" fill="#575757"/><rect x="72.14" y="72.50" width="9.8" height="9.8" fill="#b3b3b3"/><rect x="82.81" y="72.50" width="9.8" height="9.8" fill="#575757"/><rect x="93.48" y="72.50" width="9.8" height="9.8" fill="#b3b3b3"/><rect x="104.15" y="72.50" width="9.8" height="9.8" fill="#b3b3b3"/><rect x="114.82" y="72.50" width="9.8" height="9.8" fill="#575757"/><rect x="125.49" y="72.50" width="9.8" height="9.8" fill="#b3b3b3"/><rect x="136.16" y="72.50" width="9.8" height="9.8" fill="#575757"/><rect x="146.83" y="72.50" width="9.8" height="9.8" fill="#b3b3b3"/><rect x="157.50" y="72.50" width="9.8" height="9.8" fill="#575757"/><rect x="168.17" y="72.50" width="9.8" height="9.8" fill="#b3b3b3"/><text x="181.64" y="90.90" font-size="7" fill="#8a8a8a" font-family="Liberation Sans">F</text><rect x="50.80" y="83.50" width="9.8" height="9.8" fill="#b3b3b3"/><rect x="61.47" y="83.50" width="9.8" height="9.8" fill="#b3b3b3"/><rect x="72.14" y="83.50" width="9.8" height="9.8" fill="#b3b3b3"/><rect x="82.81" y="83.50" width="9.8" height="9.8" fill="#b3b3b3"/><rect x="93.48" y="83.50" width="9.8" height="9.8" fill="#b3b3b3"/><rect x="104.45" y="83.10" width="9.60" height="11.40" fill="#86e0f5"/><rect x="115.12" y="83.10" width="9.60" height="11.40" fill="#86e0f5"/><rect x="125.49" y="83.50" width="9.8" height="9.8" fill="#b3b3b3"/><rect x="136.16" y="83.50" width="9.8" height="9.8" fill="#b3b3b3"/><rect x="146.83" y="83.50" width="9.8" height="9.8" fill="#b3b3b3"/><rect x="157.50" y="83.50" width="9.8" height="9.8" fill="#b3b3b3"/><rect x="168.17" y="83.50" width="9.8" height="9.8" fill="#b3b3b3"/><text x="181.64" y="101.90" font-size="7" fill="#8a8a8a" font-family="Liberation Sans">E</text><rect x="50.80" y="94.50" width="9.8" height="9.8" fill="#b3b3b3"/><rect x="61.47" y="94.50" width="9.8" height="9.8" fill="#b3b3b3"/><rect x="72.14" y="94.50" width="9.8" height="9.8" fill="#b3b3b3"/><rect x="82.81" y="94.50" width="9.8" height="9.8" fill="#b3b3b3"/><rect x="93.78" y="94.10" width="9.60" height="11.40" fill="#86e0f5"/><rect x="104.15" y="94.50" width="9.8" height="9.8" fill="#b3b3b3"/><rect x="114.82" y="94.50" width="9.8" height="9.8" fill="#b3b3b3"/><rect x="125.49" y="94.50" width="9.8" height="9.8" fill="#b3b3b3"/><rect x="136.16" y="94.50" width="9.8" height="9.8" fill="#b3b3b3"/><rect x="146.83" y="94.50" width="9.8" height="9.8" fill="#b3b3b3"/><rect x="157.50" y="94.50" width="9.8" height="9.8" fill="#b3b3b3"/><rect x="168.17" y="94.50" width="9.8" height="9.8" fill="#b3b3b3"/><text x="181.64" y="112.90" font-size="7" fill="#8a8a8a" font-family="Liberation Sans">D#</text><rect x="50.80" y="105.50" width="9.8" height="9.8" fill="#b3b3b3"/><rect x="61.47" y="105.50" width="9.8" height="9.8" fill="#575757"/><rect x="72.14" y="105.50" width="9.8" height="9.8" fill="#b3b3b3"/><rect x="82.81" y="105.50" width="9.8" height="9.8" fill="#575757"/><rect x="93.48" y="105.50" width="9.8" height="9.8" fill="#b3b3b3"/><rect x="104.15" y="105.50" width="9.8" height="9.8" fill="#b3b3b3"/><rect x="114.82" y="105.50" width="9.8" height="9.8" fill="#575757"/><rect x="125.49" y="105.50" width="9.8" height="9.8" fill="#b3b3b3"/><rect x="136.16" y="105.50" width="9.8" height="9.8" fill="#575757"/><rect x="146.83" y="105.50" width="9.8" height="9.8" fill="#b3b3b3"/><rect x="157.50" y="105.50" width="9.8" height="9.8" fill="#575757"/><rect x="168.17" y="105.50" width="9.8" height="9.8" fill="#b3b3b3"/><text x="181.64" y="123.90" font-size="7" fill="#8a8a8a" font-family="Liberation Sans">D</text><rect x="50.80" y="116.50" width="9.8" height="9.8" fill="#b3b3b3"/><rect x="61.47" y="116.50" width="9.8" height="9.8" fill="#b3b3b3"/><rect x="72.44" y="116.10" width="9.60" height="11.40" fill="#86e0f5"/><rect x="83.11" y="116.10" width="9.60" height="11.40" fill="#86e0f5"/><rect x="93.48" y="116.50" width="9.8" height="9.8" fill="#b3b3b3"/><rect x="104.15" y="116.50" width="9.8" height="9.8" fill="#b3b3b3"/><rect x="114.82" y="116.50" width="9.8" height="9.8" fill="#b3b3b3"/><rect x="125.49" y="116.50" width="9.8" height="9.8" fill="#b3b3b3"/><rect x="136.16" y="116.50" width="9.8" height="9.8" fill="#b3b3b3"/><rect x="146.83" y="116.50" width="9.8" height="9.8" fill="#b3b3b3"/><rect x="157.50" y="116.50" width="9.8" height="9.8" fill="#b3b3b3"/><rect x="168.17" y="116.50" width="9.8" height="9.8" fill="#b3b3b3"/><text x="181.64" y="134.90" font-size="7" fill="#8a8a8a" font-family="Liberation Sans">C#</text><rect x="50.80" y="127.50" width="9.8" height="9.8" fill="#b3b3b3"/><rect x="61.47" y="127.50" width="9.8" height="9.8" fill="#575757"/><rect x="72.14" y="127.50" width="9.8" height="9.8" fill="#b3b3b3"/><rect x="82.81" y="127.50" width="9.8" height="9.8" fill="#575757"/><rect x="93.48" y="127.50" width="9.8" height="9.8" fill="#b3b3b3"/><rect x="104.15" y="127.50" width="9.8" height="9.8" fill="#b3b3b3"/><rect x="114.82" y="127.50" width="9.8" height="9.8" fill="#575757"/><rect x="125.49" y="127.50" width="9.8" height="9.8" fill="#b3b3b3"/><rect x="136.16" y="127.50" width="9.8" height="9.8" fill="#575757"/><rect x="146.83" y="127.50" width="9.8" height="9.8" fill="#b3b3b3"/><rect x="157.50" y="127.50" width="9.8" height="9.8" fill="#575757"/><rect x="168.17" y="127.50" width="9.8" height="9.8" fill="#b3b3b3"/><text x="181.64" y="145.90" font-size="7" fill="#8a8a8a" font-family="Liberation Sans">C</text><rect x="51.10" y="138.10" width="9.60" height="11.40" fill="#86e0f5"/><rect x="61.77" y="138.10" width="9.60" height="11.40" fill="#86e0f5"/><rect x="72.14" y="138.50" width="9.8" height="9.8" fill="#b3b3b3"/><rect x="82.81" y="138.50" width="9.8" height="9.8" fill="#b3b3b3"/><rect x="93.48" y="138.50" width="9.8" height="9.8" fill="#b3b3b3"/><rect x="104.15" y="138.50" width="9.8" height="9.8" fill="#b3b3b3"/><rect x="114.82" y="138.50" width="9.8" height="9.8" fill="#b3b3b3"/><rect x="125.49" y="138.50" width="9.8" height="9.8" fill="#b3b3b3"/><rect x="136.16" y="138.50" width="9.8" height="9.8" fill="#b3b3b3"/><rect x="146.83" y="138.50" width="9.8" height="9.8" fill="#b3b3b3"/><rect x="157.50" y="138.50" width="9.8" height="9.8" fill="#b3b3b3"/><rect x="168.17" y="138.50" width="9.8" height="9.8" fill="#b3b3b3"/></svg>
<svg width="1200" height="899" style="left:0;top:0"><path d="M112.30,756.70 A18,18 0 0 1 96.71,729.70" stroke="#a3a8a6" stroke-width="4" fill="none"/><path d="M103.03,723.27 A18,18 0 0 1 130.30,738.70" stroke="#a3a8a6" stroke-width="4" fill="none"/><polygon points="97.30000000000001,716.9 87.80000000000001,724 97.30000000000001,724" fill="#86e0f5"/></svg>
<div class="t" style="left:-78.20px;top:740.92px;width:400px;text-align:center;font-size:19px;line-height:23px;color:#e6e6e6;">0</div>
<div class="r" style="left:-178px;top:783px;width:35px;height:30px;background:#c0c0c0;border-radius:4px;"></div>
<div class="t" style="left:-360.41px;top:786.74px;width:400px;text-align:center;font-size:19.5px;line-height:23px;color:#3d3d3d;letter-spacing:0.175px;">-48</div>
<div class="r" style="left:-138px;top:783px;width:35px;height:30px;background:#c0c0c0;border-radius:4px;"></div>
<div class="t" style="left:-320.41px;top:786.74px;width:400px;text-align:center;font-size:19.5px;line-height:23px;color:#3d3d3d;letter-spacing:0.175px;">-36</div>
<div class="r" style="left:-98px;top:783px;width:35px;height:30px;background:#c0c0c0;border-radius:4px;"></div>
<div class="t" style="left:-280.41px;top:786.74px;width:400px;text-align:center;font-size:19.5px;line-height:23px;color:#3d3d3d;letter-spacing:0.175px;">-24</div>
<div class="r" style="left:-58px;top:783px;width:35px;height:30px;background:#c0c0c0;border-radius:4px;"></div>
<div class="t" style="left:-240.41px;top:786.74px;width:400px;text-align:center;font-size:19.5px;line-height:23px;color:#3d3d3d;letter-spacing:0.175px;">-12</div>
<div class="r" style="left:-18px;top:783px;width:35px;height:30px;background:#86e0f5;border-radius:4px;"></div>
<div class="t" style="left:-200.50px;top:786.74px;width:400px;text-align:center;font-size:19.5px;line-height:23px;color:#3d3d3d;">0</div>
<div class="r" style="left:22px;top:783px;width:35px;height:30px;background:#c0c0c0;border-radius:4px;"></div>
<div class="t" style="left:-160.97px;top:786.74px;width:400px;text-align:center;font-size:19.5px;line-height:23px;color:#3d3d3d;letter-spacing:-0.950px;">12</div>
<div class="r" style="left:62px;top:783px;width:35px;height:30px;background:#c0c0c0;border-radius:4px;"></div>
<div class="t" style="left:-120.97px;top:786.74px;width:400px;text-align:center;font-size:19.5px;line-height:23px;color:#3d3d3d;letter-spacing:-0.950px;">24</div>
<div class="r" style="left:102px;top:783px;width:35px;height:30px;background:#c0c0c0;border-radius:4px;"></div>
<div class="t" style="left:-80.97px;top:786.74px;width:400px;text-align:center;font-size:19.5px;line-height:23px;color:#3d3d3d;letter-spacing:-0.950px;">36</div>
<div class="r" style="left:142px;top:783px;width:35px;height:30px;background:#c0c0c0;border-radius:4px;"></div>
<div class="t" style="left:-40.98px;top:786.74px;width:400px;text-align:center;font-size:19.5px;line-height:23px;color:#3d3d3d;letter-spacing:-0.950px;">48</div>
<div class="r" style="left:-175.5px;top:839px;width:360px;height:32px;background:#86e0f5;border-radius:4px;"></div>
<div class="t" style="left:-195.20px;top:845.22px;width:400px;text-align:center;font-size:19px;line-height:23px;color:#000;">1</div>
<div class="r" style="left:210px;top:469px;width:384px;height:386px;background:#4a4a4a;border-radius:8px;"></div>
<div class="r" style="left:220px;top:481px;width:154px;height:22px;background:#ffffff;border-radius:4px;"></div>
<div class="t" style="left:96.33px;top:481.79px;width:400px;text-align:center;font-size:18.5px;line-height:22px;color:#000;letter-spacing:-1.350px;">ON</div>
<div class="r" style="left:384px;top:479px;width:90px;height:26px;background:#474747;border-radius:0px;"></div>
<div class="r" style="left:386px;top:481px;width:86px;height:22px;background:#92f5c4;border-radius:0px;"></div>
<div class="t" style="left:229.15px;top:481.79px;width:400px;text-align:center;font-size:18.5px;line-height:22px;color:#000;letter-spacing:0.300px;">A#0</div>
<div class="r" style="left:476px;top:479px;width:90px;height:26px;background:#474747;border-radius:0px;"></div>
<div class="r" style="left:478px;top:481px;width:86px;height:22px;background:#92f5c4;border-radius:0px;"></div>
<div class="t" style="left:319.98px;top:481.79px;width:400px;text-align:center;font-size:18.5px;line-height:22px;color:#000;letter-spacing:-2.050px;">E3</div>
<div class="r" style="left:222px;top:529px;width:68px;height:30px;background:#a5a8a7;border-radius:4px;"></div>
<div class="t" style="left:55.95px;top:533.39px;width:400px;text-align:center;font-size:18.5px;line-height:22px;color:#000;letter-spacing:-0.100px;">All</div>
<div class="r" style="left:300px;top:531px;width:54px;height:26px;background:#474747;border-radius:0px;"></div>
<div class="r" style="left:302px;top:533px;width:50px;height:22px;background:#c4c4c4;border-radius:0px;"></div>
<div class="t" style="left:304.20px;top:533.56px;width:600px;text-align:left;font-size:18px;line-height:22px;color:#000;">C</div>
<div class="r" style="left:358px;top:531px;width:196px;height:26px;background:#474747;border-radius:0px;"></div>
<div class="r" style="left:360px;top:533px;width:192px;height:22px;background:#c4c4c4;border-radius:0px;"></div>
<div class="t" style="left:363.00px;top:533.56px;width:600px;text-align:left;font-size:18px;line-height:22px;color:#000;letter-spacing:0.325px;">Major</div>
<svg width="400" height="30" style="left:210px;top:530px"><polygon points="125.3,9 139,9 132.15,18.3" fill="#000"/><polygon points="325,9.3 338.7,9.3 331.85,18.5" fill="#000"/></svg>
<div class="r" style="left:558px;top:531px;width:27px;height:26px;background:#a7abaa;border-radius:6px;"></div>
<div class="t" style="left:371.25px;top:533.29px;width:400px;text-align:center;font-size:18.5px;line-height:22px;color:#626262;letter-spacing:-0.500px;">lin</div>
<div class="r" style="left:220px;top:588px;width:66px;height:34px;background:#b1b1b1;border-radius:5px;"></div>
<div class="t" style="left:53.00px;top:592.92px;width:400px;text-align:center;font-size:19px;line-height:23px;color:#000;transform:scaleX(1.152);">off</div>
<div class="r" style="left:294px;top:588px;width:66px;height:34px;background:#87dcfd;border-radius:5px;"></div>
<div class="t" style="left:126.79px;top:592.92px;width:400px;text-align:center;font-size:19px;line-height:23px;color:#000;letter-spacing:-0.412px;">scale</div>
<div class="r" style="left:368px;top:588px;width:66px;height:34px;background:#b1b1b1;border-radius:5px;"></div>
<div class="t" style="left:201.15px;top:592.92px;width:400px;text-align:center;font-size:19px;line-height:23px;color:#000;letter-spacing:0.300px;">chord</div>
<div class="r" style="left:450px;top:587px;width:120px;height:34px;background:#dcdde0;border-radius:5px;"></div>
<div class="t" style="left:309.84px;top:592.92px;width:400px;text-align:center;font-size:19px;line-height:23px;color:#3c414a;letter-spacing:-0.312px;">learn</div>
<div class="r" style="left:450px;top:627px;width:120px;height:24px;background:#d0d0d0;border-radius:5px;"></div>
<div class="t" style="left:310.20px;top:626.62px;width:400px;text-align:center;font-size:19px;line-height:23px;color:#3c414a;letter-spacing:0.400px;">instant</div>
<div class="r" style="left:450px;top:673px;width:120px;height:22px;background:#d9d9d9;border-radius:5px;"></div>
<div class="t" style="left:310.12px;top:672.72px;width:400px;text-align:center;font-size:19px;line-height:23px;color:#000;letter-spacing:0.242px;">pitched</div>
<svg width="400" height="160" style="left:210px;top:620px"><text x="55.70" y="13.6" font-size="7" fill="#8a8a8a" text-anchor="middle" font-family="Liberation Sans">C</text><text x="66.37" y="13.6" font-size="7" fill="#8a8a8a" text-anchor="middle" font-family="Liberation Sans">C#</text><text x="77.04" y="13.6" font-size="7" fill="#8a8a8a" text-anchor="middle" font-family="Liberation Sans">D</text><text x="87.71" y="13.6" font-size="7" fill="#8a8a8a" text-anchor="middle" font-family="Liberation Sans">D#</text><text x="98.38" y="13.6" font-size="7" fill="#8a8a8a" text-anchor="middle" font-family="Liberation Sans">E</text><text x="109.05" y="13.6" font-size="7" fill="#8a8a8a" text-anchor="middle" font-family="Liberation Sans">F</text><text x="119.72" y="13.6" font-size="7" fill="#8a8a8a" text-anchor="middle" font-family="Liberation Sans">F#</text><text x="130.39" y="13.6" font-size="7" fill="#8a8a8a" text-anchor="middle" font-family="Liberation Sans">G</text><text x="141.06" y="13.6" font-size="7" fill="#8a8a8a" text-anchor="middle" font-family="Liberation Sans">G#</text><text x="151.73" y="13.6" font-size="7" fill="#8a8a8a" text-anchor="middle" font-family="Liberation Sans">A</text><text x="162.40" y="13.6" font-size="7" fill="#8a8a8a" text-anchor="middle" font-family="Liberation Sans">A#</text><text x="173.07" y="13.6" font-size="7" fill="#8a8a8a" text-anchor="middle" font-family="Liberation Sans">B</text><text x="181.64" y="24.90" font-size="7" fill="#8a8a8a" font-family="Liberation Sans">B</text><rect x="50.80" y="17.50" width="9.8" height="9.8" fill="#b3b3b3"/><rect x="61.47" y="17.50" width="9.8" height="9.8" fill="#b3b3b3"/><rect x="72.14" y="17.50" width="9.8" height="9.8" fill="#b3b3b3"/><rect x="82.81" y="17.50" width="9.8" height="9.8" fill="#b3b3b3"/><rect x="93.48" y="17.50" width="9.8" height="9.8" fill="#b3b3b3"/><rect x="104.15" y="17.50" width="9.8" height="9.8" fill="#b3b3b3"/><rect x="114.82" y="17.50" width="9.8" height="9.8" fill="#b3b3b3"/><rect x="125.49" y="17.50" width="9.8" height="9.8" fill="#b3b3b3"/><rect x="136.16" y="17.50" width="9.8" height="9.8" fill="#b3b3b3"/><rect x="146.83" y="17.50" width="9.8" height="9.8" fill="#b3b3b3"/><rect x="157.50" y="17.50" width="9.8" height="9.8" fill="#b3b3b3"/><rect x="168.47" y="17.10" width="9.60" height="11.40" fill="#92f5c4"/><text x="181.64" y="35.90" font-size="7" fill="#8a8a8a" font-family="Liberation Sans">A#</text><rect x="50.80" y="28.50" width="9.8" height="9.8" fill="#b3b3b3"/><rect x="61.47" y="28.50" width="9.8" height="9.8" fill="#575757"/><rect x="72.14" y="28.50" width="9.8" height="9.8" fill="#b3b3b3"/><rect x="82.81" y="28.50" width="9.8" height="9.8" fill="#575757"/><rect x="93.48" y="28.50" width="9.8" height="9.8" fill="#b3b3b3"/><rect x="104.15" y="28.50" width="9.8" height="9.8" fill="#b3b3b3"/><rect x="114.82" y="28.50" width="9.8" height="9.8" fill="#575757"/><rect x="125.49" y="28.50" width="9.8" height="9.8" fill="#b3b3b3"/><rect x="136.16" y="28.50" width="9.8" height="9.8" fill="#575757"/><rect x="146.83" y="28.50" width="9.8" height="9.8" fill="#b3b3b3"/><rect x="157.50" y="28.50" width="9.8" height="9.8" fill="#575757"/><rect x="168.17" y="28.50" width="9.8" height="9.8" fill="#b3b3b3"/><text x="181.64" y="46.90" font-size="7" fill="#8a8a8a" font-family="Liberation Sans">A</text><rect x="50.80" y="39.50" width="9.8" height="9.8" fill="#b3b3b3"/><rect x="61.47" y="39.50" width="9.8" height="9.8" fill="#b3b3b3"/><rect x="72.14" y="39.50" width="9.8" height="9.8" fill="#b3b3b3"/><rect x="82.81" y="39.50" width="9.8" height="9.8" fill="#b3b3b3"/><rect x="93.48" y="39.50" width="9.8" height="9.8" fill="#b3b3b3"/><rect x="104.15" y="39.50" width="9.8" height="9.8" fill="#b3b3b3"/><rect x="114.82" y="39.50" width="9.8" height="9.8" fill="#b3b3b3"/><rect x="125.49" y="39.50" width="9.8" height="9.8" fill="#b3b3b3"/><rect x="136.16" y="39.50" width="9.8" height="9.8" fill="#b3b3b3"/><rect x="147.13" y="39.10" width="9.60" height="11.40" fill="#92f5c4"/><rect x="157.80" y="39.10" width="9.60" height="11.40" fill="#92f5c4"/><rect x="168.17" y="39.50" width="9.8" height="9.8" fill="#b3b3b3"/><text x="181.64" y="57.90" font-size="7" fill="#8a8a8a" font-family="Liberation Sans">G#</text><rect x="50.80" y="50.50" width="9.8" height="9.8" fill="#b3b3b3"/><rect x="61.47" y="50.50" width="9.8" height="9.8" fill="#575757"/><rect x="72.14" y="50.50" width="9.8" height="9.8" fill="#b3b3b3"/><rect x="82.81" y="50.50" width="9.8" height="9.8" fill="#575757"/><rect x="93.48" y="50.50" width="9.8" height="9.8" fill="#b3b3b3"/><rect x="104.15" y="50.50" width="9.8" height="9.8" fill="#b3b3b3"/><rect x="114.82" y="50.50" width="9.8" height="9.8" fill="#575757"/><rect x="125.49" y="50.50" width="9.8" height="9.8" fill="#b3b3b3"/><rect x="136.16" y="50.50" width="9.8" height="9.8" fill="#575757"/><rect x="146.83" y="50.50" width="9.8" height="9.8" fill="#b3b3b3"/><rect x="157.50" y="50.50" width="9.8" height="9.8" fill="#575757"/><rect x="168.17" y="50.50" width="9.8" height="9.8" fill="#b3b3b3"/><text x="181.64" y="68.90" font-size="7" fill="#8a8a8a" font-family="Liberation Sans">G</text><rect x="50.80" y="61.50" width="9.8" height="9.8" fill="#b3b3b3"/><rect x="61.47" y="61.50" width="9.8" height="9.8" fill="#b3b3b3"/><rect x="72.14" y="61.50" width="9.8" height="9.8" fill="#b3b3b3"/><rect x="82.81" y="61.50" width="9.8" height="9.8" fill="#b3b3b3"/><rect x="93.48" y="61.50" width="9.8" height="9.8" fill="#b3b3b3"/><rect x="104.15" y="61.50" width="9.8" height="9.8" fill="#b3b3b3"/><rect x="114.82" y="61.50" width="9.8" height="9.8" fill="#b3b3b3"/><rect x="125.79" y="61.10" width="9.60" height="11.40" fill="#92f5c4"/><rect x="136.46" y="61.10" width="9.60" height="11.40" fill="#92f5c4"/><rect x="146.83" y="61.50" width="9.8" height="9.8" fill="#b3b3b3"/><rect x="157.50" y="61.50" width="9.8" height="9.8" fill="#b3b3b3"/><rect x="168.17" y="61.50" width="9.8" height="9.8" fill="#b3b3b3"/><text x="181.64" y="79.90" font-size="7" fill="#8a8a8a" font-family="Liberation Sans">F#</text><rect x="50.80" y="72.50" width="9.8" height="9.8" fill="#b3b3b3"/><rect x="61.47" y="72.50" width="9.8" height="9.8" fill="#575757"/><rect x="72.14" y="72.50" width="9.8" height="9.8" fill="#b3b3b3"/><rect x="82.81" y="72.50" width="9.8" height="9.8" fill="#575757"/><rect x="93.48" y="72.50" width="9.8" height="9.8" fill="#b3b3b3"/><rect x="104.15" y="72.50" width="9.8" height="9.8" fill="#b3b3b3"/><rect x="114.82" y="72.50" width="9.8" height="9.8" fill="#575757"/><rect x="125.49" y="72.50" width="9.8" height="9.8" fill="#b3b3b3"/><rect x="136.16" y="72.50" width="9.8" height="9.8" fill="#575757"/><rect x="146.83" y="72.50" width="9.8" height="9.8" fill="#b3b3b3"/><rect x="157.50" y="72.50" width="9.8" height="9.8" fill="#575757"/><rect x="168.17" y="72.50" width="9.8" height="9.8" fill="#b3b3b3"/><text x="181.64" y="90.90" font-size="7" fill="#8a8a8a" font-family="Liberation Sans">F</text><rect x="50.80" y="83.50" width="9.8" height="9.8" fill="#b3b3b3"/><rect x="61.47" y="83.50" width="9.8" height="9.8" fill="#b3b3b3"/><rect x="72.14" y="83.50" width="9.8" height="9.8" fill="#b3b3b3"/><rect x="82.81" y="83.50" width="9.8" height="9.8" fill="#b3b3b3"/><rect x="93.48" y="83.50" width="9.8" height="9.8" fill="#b3b3b3"/><rect x="104.45" y="83.10" width="9.60" height="11.40" fill="#92f5c4"/><rect x="115.12" y="83.10" width="9.60" height="11.40" fill="#92f5c4"/><rect x="125.49" y="83.50" width="9.8" height="9.8" fill="#b3b3b3"/><rect x="136.16" y="83.50" width="9.8" height="9.8" fill="#b3b3b3"/><rect x="146.83" y="83.50" width="9.8" height="9.8" fill="#b3b3b3"/><rect x="157.50" y="83.50" width="9.8" height="9.8" fill="#b3b3b3"/><rect x="168.17" y="83.50" width="9.8" height="9.8" fill="#b3b3b3"/><text x="181.64" y="101.90" font-size="7" fill="#8a8a8a" font-family="Liberation Sans">E</text><rect x="50.80" y="94.50" width="9.8" height="9.8" fill="#b3b3b3"/><rect x="61.47" y="94.50" width="9.8" height="9.8" fill="#b3b3b3"/><rect x="72.14" y="94.50" width="9.8" height="9.8" fill="#b3b3b3"/><rect x="82.81" y="94.50" width="9.8" height="9.8" fill="#b3b3b3"/><rect x="93.78" y="94.10" width="9.60" height="11.40" fill="#92f5c4"/><rect x="104.15" y="94.50" width="9.8" height="9.8" fill="#b3b3b3"/><rect x="114.82" y="94.50" width="9.8" height="9.8" fill="#b3b3b3"/><rect x="125.49" y="94.50" width="9.8" height="9.8" fill="#b3b3b3"/><rect x="136.16" y="94.50" width="9.8" height="9.8" fill="#b3b3b3"/><rect x="146.83" y="94.50" width="9.8" height="9.8" fill="#b3b3b3"/><rect x="157.50" y="94.50" width="9.8" height="9.8" fill="#b3b3b3"/><rect x="168.17" y="94.50" width="9.8" height="9.8" fill="#b3b3b3"/><text x="181.64" y="112.90" font-size="7" fill="#8a8a8a" font-family="Liberation Sans">D#</text><rect x="50.80" y="105.50" width="9.8" height="9.8" fill="#b3b3b3"/><rect x="61.47" y="105.50" width="9.8" height="9.8" fill="#575757"/><rect x="72.14" y="105.50" width="9.8" height="9.8" fill="#b3b3b3"/><rect x="82.81" y="105.50" width="9.8" height="9.8" fill="#575757"/><rect x="93.48" y="105.50" width="9.8" height="9.8" fill="#b3b3b3"/><rect x="104.15" y="105.50" width="9.8" height="9.8" fill="#b3b3b3"/><rect x="114.82" y="105.50" width="9.8" height="9.8" fill="#575757"/><rect x="125.49" y="105.50" width="9.8" height="9.8" fill="#b3b3b3"/><rect x="136.16" y="105.50" width="9.8" height="9.8" fill="#575757"/><rect x="146.83" y="105.50" width="9.8" height="9.8" fill="#b3b3b3"/><rect x="157.50" y="105.50" width="9.8" height="9.8" fill="#575757"/><rect x="168.17" y="105.50" width="9.8" height="9.8" fill="#b3b3b3"/><text x="181.64" y="123.90" font-size="7" fill="#8a8a8a" font-family="Liberation Sans">D</text><rect x="50.80" y="116.50" width="9.8" height="9.8" fill="#b3b3b3"/><rect x="61.47" y="116.50" width="9.8" height="9.8" fill="#b3b3b3"/><rect x="72.44" y="116.10" width="9.60" height="11.40" fill="#92f5c4"/><rect x="83.11" y="116.10" width="9.60" height="11.40" fill="#92f5c4"/><rect x="93.48" y="116.50" width="9.8" height="9.8" fill="#b3b3b3"/><rect x="104.15" y="116.50" width="9.8" height="9.8" fill="#b3b3b3"/><rect x="114.82" y="116.50" width="9.8" height="9.8" fill="#b3b3b3"/><rect x="125.49" y="116.50" width="9.8" height="9.8" fill="#b3b3b3"/><rect x="136.16" y="116.50" width="9.8" height="9.8" fill="#b3b3b3"/><rect x="146.83" y="116.50" width="9.8" height="9.8" fill="#b3b3b3"/><rect x="157.50" y="116.50" width="9.8" height="9.8" fill="#b3b3b3"/><rect x="168.17" y="116.50" width="9.8" height="9.8" fill="#b3b3b3"/><text x="181.64" y="134.90" font-size="7" fill="#8a8a8a" font-family="Liberation Sans">C#</text><rect x="50.80" y="127.50" width="9.8" height="9.8" fill="#b3b3b3"/><rect x="61.47" y="127.50" width="9.8" height="9.8" fill="#575757"/><rect x="72.14" y="127.50" width="9.8" height="9.8" fill="#b3b3b3"/><rect x="82.81" y="127.50" width="9.8" height="9.8" fill="#575757"/><rect x="93.48" y="127.50" width="9.8" height="9.8" fill="#b3b3b3"/><rect x="104.15" y="127.50" width="9.8" height="9.8" fill="#b3b3b3"/><rect x="114.82" y="127.50" width="9.8" height="9.8" fill="#575757"/><rect x="125.49" y="127.50" width="9.8" height="9.8" fill="#b3b3b3"/><rect x="136.16" y="127.50" width="9.8" height="9.8" fill="#575757"/><rect x="146.83" y="127.50" width="9.8" height="9.8" fill="#b3b3b3"/><rect x="157.50" y="127.50" width="9.8" height="9.8" fill="#575757"/><rect x="168.17" y="127.50" width="9.8" height="9.8" fill="#b3b3b3"/><text x="181.64" y="145.90" font-size="7" fill="#8a8a8a" font-family="Liberation Sans">C</text><rect x="51.10" y="138.10" width="9.60" height="11.40" fill="#92f5c4"/><rect x="61.77" y="138.10" width="9.60" height="11.40" fill="#92f5c4"/><rect x="72.14" y="138.50" width="9.8" height="9.8" fill="#b3b3b3"/><rect x="82.81" y="138.50" width="9.8" height="9.8" fill="#b3b3b3"/><rect x="93.48" y="138.50" width="9.8" height="9.8" fill="#b3b3b3"/><rect x="104.15" y="138.50" width="9.8" height="9.8" fill="#b3b3b3"/><rect x="114.82" y="138.50" width="9.8" height="9.8" fill="#b3b3b3"/><rect x="125.49" y="138.50" width="9.8" height="9.8" fill="#b3b3b3"/><rect x="136.16" y="138.50" width="9.8" height="9.8" fill="#b3b3b3"/><rect x="146.83" y="138.50" width="9.8" height="9.8" fill="#b3b3b3"/><rect x="157.50" y="138.50" width="9.8" height="9.8" fill="#b3b3b3"/><rect x="168.17" y="138.50" width="9.8" height="9.8" fill="#b3b3b3"/></svg>
<svg width="1200" height="899" style="left:0;top:0"><path d="M508.30,756.70 A18,18 0 0 1 492.71,729.70" stroke="#a3a8a6" stroke-width="4" fill="none"/><path d="M499.03,723.27 A18,18 0 0 1 526.30,738.70" stroke="#a3a8a6" stroke-width="4" fill="none"/><polygon points="493.3,716.9 483.8,724 493.3,724" fill="#92f5c4"/></svg>
<div class="t" style="left:317.80px;top:740.92px;width:400px;text-align:center;font-size:19px;line-height:23px;color:#e6e6e6;">0</div>
<div class="r" style="left:218px;top:783px;width:35px;height:30px;background:#c0c0c0;border-radius:4px;"></div>
<div class="t" style="left:35.59px;top:786.74px;width:400px;text-align:center;font-size:19.5px;line-height:23px;color:#3d3d3d;letter-spacing:0.175px;">-48</div>
<div class="r" style="left:258px;top:783px;width:35px;height:30px;background:#c0c0c0;border-radius:4px;"></div>
<div class="t" style="left:75.59px;top:786.74px;width:400px;text-align:center;font-size:19.5px;line-height:23px;color:#3d3d3d;letter-spacing:0.175px;">-36</div>
<div class="r" style="left:298px;top:783px;width:35px;height:30px;background:#c0c0c0;border-radius:4px;"></div>
<div class="t" style="left:115.59px;top:786.74px;width:400px;text-align:center;font-size:19.5px;line-height:23px;color:#3d3d3d;letter-spacing:0.175px;">-24</div>
<div class="r" style="left:338px;top:783px;width:35px;height:30px;background:#c0c0c0;border-radius:4px;"></div>
<div class="t" style="left:155.59px;top:786.74px;width:400px;text-align:center;font-size:19.5px;line-height:23px;color:#3d3d3d;letter-spacing:0.175px;">-12</div>
<div class="r" style="left:378px;top:783px;width:35px;height:30px;background:#92f5c4;border-radius:4px;"></div>
<div class="t" style="left:195.50px;top:786.74px;width:400px;text-align:center;font-size:19.5px;line-height:23px;color:#3d3d3d;">0</div>
<div class="r" style="left:418px;top:783px;width:35px;height:30px;background:#c0c0c0;border-radius:4px;"></div>
<div class="t" style="left:235.03px;top:786.74px;width:400px;text-align:center;font-size:19.5px;line-height:23px;color:#3d3d3d;letter-spacing:-0.950px;">12</div>
<div class="r" style="left:458px;top:783px;width:35px;height:30px;background:#c0c0c0;border-radius:4px;"></div>
<div class="t" style="left:275.02px;top:786.74px;width:400px;text-align:center;font-size:19.5px;line-height:23px;color:#3d3d3d;letter-spacing:-0.950px;">24</div>
<div class="r" style="left:498px;top:783px;width:35px;height:30px;background:#c0c0c0;border-radius:4px;"></div>
<div class="t" style="left:315.02px;top:786.74px;width:400px;text-align:center;font-size:19.5px;line-height:23px;color:#3d3d3d;letter-spacing:-0.950px;">36</div>
<div class="r" style="left:538px;top:783px;width:35px;height:30px;background:#c0c0c0;border-radius:4px;"></div>
<div class="t" style="left:355.02px;top:786.74px;width:400px;text-align:center;font-size:19.5px;line-height:23px;color:#3d3d3d;letter-spacing:-0.950px;">48</div>
<div class="r" style="left:222.0px;top:839px;width:360px;height:32px;background:linear-gradient(#a9a9a9,#a5a5a5);border-radius:4px;"></div>
<div class="t" style="left:202.30px;top:845.22px;width:400px;text-align:center;font-size:19px;line-height:23px;color:#000;">2</div>
<div class="r" style="left:606px;top:469px;width:384px;height:386px;background:#4a4a4a;border-radius:8px;"></div>
<div class="r" style="left:616px;top:481px;width:154px;height:22px;background:#ffffff;border-radius:4px;"></div>
<div class="t" style="left:492.32px;top:481.79px;width:400px;text-align:center;font-size:18.5px;line-height:22px;color:#000;letter-spacing:-1.350px;">ON</div>
<div class="r" style="left:782px;top:479px;width:90px;height:26px;background:#474747;border-radius:0px;"></div>
<div class="r" style="left:784px;top:481px;width:86px;height:22px;background:#eaa9a5;border-radius:0px;"></div>
<div class="t" style="left:626.40px;top:481.79px;width:400px;text-align:center;font-size:18.5px;line-height:22px;color:#000;letter-spacing:-1.200px;">F3</div>
<div class="r" style="left:874px;top:479px;width:90px;height:26px;background:#474747;border-radius:0px;"></div>
<div class="r" style="left:876px;top:481px;width:86px;height:22px;background:#eaa9a5;border-radius:0px;"></div>
<div class="t" style="left:718.27px;top:481.79px;width:400px;text-align:center;font-size:18.5px;line-height:22px;color:#000;letter-spacing:-1.450px;">B5</div>
<div class="r" style="left:618px;top:529px;width:68px;height:30px;background:#a5a8a7;border-radius:4px;"></div>
<div class="t" style="left:451.95px;top:533.39px;width:400px;text-align:center;font-size:18.5px;line-height:22px;color:#000;letter-spacing:-0.100px;">All</div>
<div class="r" style="left:698px;top:531px;width:54px;height:26px;background:#474747;border-radius:0px;"></div>
<div class="r" style="left:700px;top:533px;width:50px;height:22px;background:#c4c4c4;border-radius:0px;"></div>
<div class="t" style="left:702.20px;top:533.56px;width:600px;text-align:left;font-size:18px;line-height:22px;color:#000;">C</div>
<div class="r" style="left:756px;top:531px;width:196px;height:26px;background:#474747;border-radius:0px;"></div>
<div class="r" style="left:758px;top:533px;width:192px;height:22px;background:#c4c4c4;border-radius:0px;"></div>
<div class="t" style="left:761.00px;top:533.56px;width:600px;text-align:left;font-size:18px;line-height:22px;color:#000;letter-spacing:0.325px;">Major</div>
<svg width="400" height="30" style="left:608px;top:530px"><polygon points="125.3,9 139,9 132.15,18.3" fill="#000"/><polygon points="325,9.3 338.7,9.3 331.85,18.5" fill="#000"/></svg>
<div class="r" style="left:956px;top:531px;width:27px;height:26px;background:#a7abaa;border-radius:6px;"></div>
<div class="t" style="left:769.25px;top:533.29px;width:400px;text-align:center;font-size:18.5px;line-height:22px;color:#626262;letter-spacing:-0.500px;">lin</div>
<div class="r" style="left:616px;top:588px;width:66px;height:34px;background:#b1b1b1;border-radius:5px;"></div>
<div class="t" style="left:449.00px;top:592.92px;width:400px;text-align:center;font-size:19px;line-height:23px;color:#000;transform:scaleX(1.152);">off</div>
<div class="r" style="left:690px;top:588px;width:66px;height:34px;background:#87dcfd;border-radius:5px;"></div>
<div class="t" style="left:522.79px;top:592.92px;width:400px;text-align:center;font-size:19px;line-height:23px;color:#000;letter-spacing:-0.412px;">scale</div>
<div class="r" style="left:764px;top:588px;width:66px;height:34px;background:#b1b1b1;border-radius:5px;"></div>
<div class="t" style="left:597.15px;top:592.92px;width:400px;text-align:center;font-size:19px;line-height:23px;color:#000;letter-spacing:0.300px;">chord</div>
<div class="r" style="left:846px;top:587px;width:120px;height:34px;background:#dcdde0;border-radius:5px;"></div>
<div class="t" style="left:705.84px;top:592.92px;width:400px;text-align:center;font-size:19px;line-height:23px;color:#3c414a;letter-spacing:-0.312px;">learn</div>
<div class="r" style="left:846px;top:627px;width:120px;height:24px;background:#d0d0d0;border-radius:5px;"></div>
<div class="t" style="left:706.20px;top:626.62px;width:400px;text-align:center;font-size:19px;line-height:23px;color:#3c414a;letter-spacing:0.400px;">instant</div>
<div class="r" style="left:846px;top:673px;width:120px;height:22px;background:#d9d9d9;border-radius:5px;"></div>
<div class="t" style="left:706.12px;top:672.72px;width:400px;text-align:center;font-size:19px;line-height:23px;color:#000;letter-spacing:0.242px;">pitched</div>
<svg width="400" height="160" style="left:606px;top:620px"><text x="55.70" y="13.6" font-size="7" fill="#8a8a8a" text-anchor="middle" font-family="Liberation Sans">C</text><text x="66.37" y="13.6" font-size="7" fill="#8a8a8a" text-anchor="middle" font-family="Liberation Sans">C#</text><text x="77.04" y="13.6" font-size="7" fill="#8a8a8a" text-anchor="middle" font-family="Liberation Sans">D</text><text x="87.71" y="13.6" font-size="7" fill="#8a8a8a" text-anchor="middle" font-family="Liberation Sans">D#</text><text x="98.38" y="13.6" font-size="7" fill="#8a8a8a" text-anchor="middle" font-family="Liberation Sans">E</text><text x="109.05" y="13.6" font-size="7" fill="#8a8a8a" text-anchor="middle" font-family="Liberation Sans">F</text><text x="119.72" y="13.6" font-size="7" fill="#8a8a8a" text-anchor="middle" font-family="Liberation Sans">F#</text><text x="130.39" y="13.6" font-size="7" fill="#8a8a8a" text-anchor="middle" font-family="Liberation Sans">G</text><text x="141.06" y="13.6" font-size="7" fill="#8a8a8a" text-anchor="middle" font-family="Liberation Sans">G#</text><text x="151.73" y="13.6" font-size="7" fill="#8a8a8a" text-anchor="middle" font-family="Liberation Sans">A</text><text x="162.40" y="13.6" font-size="7" fill="#8a8a8a" text-anchor="middle" font-family="Liberation Sans">A#</text><text x="173.07" y="13.6" font-size="7" fill="#8a8a8a" text-anchor="middle" font-family="Liberation Sans">B</text><text x="181.64" y="24.90" font-size="7" fill="#8a8a8a" font-family="Liberation Sans">B</text><rect x="50.80" y="17.50" width="9.8" height="9.8" fill="#b3b3b3"/><rect x="61.47" y="17.50" width="9.8" height="9.8" fill="#b3b3b3"/><rect x="72.14" y="17.50" width="9.8" height="9.8" fill="#b3b3b3"/><rect x="82.81" y="17.50" width="9.8" height="9.8" fill="#b3b3b3"/><rect x="93.48" y="17.50" width="9.8" height="9.8" fill="#b3b3b3"/><rect x="104.15" y="17.50" width="9.8" height="9.8" fill="#b3b3b3"/><rect x="114.82" y="17.50" width="9.8" height="9.8" fill="#b3b3b3"/><rect x="125.49" y="17.50" width="9.8" height="9.8" fill="#b3b3b3"/><rect x="136.16" y="17.50" width="9.8" height="9.8" fill="#b3b3b3"/><rect x="146.83" y="17.50" width="9.8" height="9.8" fill="#b3b3b3"/><rect x="157.50" y="17.50" width="9.8" height="9.8" fill="#b3b3b3"/><rect x="168.47" y="17.10" width="9.60" height="11.40" fill="#eaa9a5"/><text x="181.64" y="35.90" font-size="7" fill="#8a8a8a" font-family="Liberation Sans">A#</text><rect x="50.80" y="28.50" width="9.8" height="9.8" fill="#b3b3b3"/><rect x="61.47" y="28.50" width="9.8" height="9.8" fill="#575757"/><rect x="72.14" y="28.50" width="9.8" height="9.8" fill="#b3b3b3"/><rect x="82.81" y="28.50" width="9.8" height="9.8" fill="#575757"/><rect x="93.48" y="28.50" width="9.8" height="9.8" fill="#b3b3b3"/><rect x="104.15" y="28.50" width="9.8" height="9.8" fill="#b3b3b3"/><rect x="114.82" y="28.50" width="9.8" height="9.8" fill="#575757"/><rect x="125.49" y="28.50" width="9.8" height="9.8" fill="#b3b3b3"/><rect x="136.16" y="28.50" width="9.8" height="9.8" fill="#575757"/><rect x="146.83" y="28.50" width="9.8" height="9.8" fill="#b3b3b3"/><rect x="157.50" y="28.50" width="9.8" height="9.8" fill="#575757"/><rect x="168.17" y="28.50" width="9.8" height="9.8" fill="#b3b3b3"/><text x="181.64" y="46.90" font-size="7" fill="#8a8a8a" font-family="Liberation Sans">A</text><rect x="50.80" y="39.50" width="9.8" height="9.8" fill="#b3b3b3"/><rect x="61.47" y="39.50" width="9.8" height="9.8" fill="#b3b3b3"/><rect x="72.14" y="39.50" width="9.8" height="9.8" fill="#b3b3b3"/><rect x="82.81" y="39.50" width="9.8" height="9.8" fill="#b3b3b3"/><rect x="93.48" y="39.50" width="9.8" height="9.8" fill="#b3b3b3"/><rect x="104.15" y="39.50" width="9.8" height="9.8" fill="#b3b3b3"/><rect x="114.82" y="39.50" width="9.8" height="9.8" fill="#b3b3b3"/><rect x="125.49" y="39.50" width="9.8" height="9.8" fill="#b3b3b3"/><rect x="136.16" y="39.50" width="9.8" height="9.8" fill="#b3b3b3"/><rect x="147.13" y="39.10" width="9.60" height="11.40" fill="#eaa9a5"/><rect x="157.80" y="39.10" width="9.60" height="11.40" fill="#eaa9a5"/><rect x="168.17" y="39.50" width="9.8" height="9.8" fill="#b3b3b3"/><text x="181.64" y="57.90" font-size="7" fill="#8a8a8a" font-family="Liberation Sans">G#</text><rect x="50.80" y="50.50" width="9.8" height="9.8" fill="#b3b3b3"/><rect x="61.47" y="50.50" width="9.8" height="9.8" fill="#575757"/><rect x="72.14" y="50.50" width="9.8" height="9.8" fill="#b3b3b3"/><rect x="82.81" y="50.50" width="9.8" height="9.8" fill="#575757"/><rect x="93.48" y="50.50" width="9.8" height="9.8" fill="#b3b3b3"/><rect x="104.15" y="50.50" width="9.8" height="9.8" fill="#b3b3b3"/><rect x="114.82" y="50.50" width="9.8" height="9.8" fill="#575757"/><rect x="125.49" y="50.50" width="9.8" height="9.8" fill="#b3b3b3"/><rect x="136.16" y="50.50" width="9.8" height="9.8" fill="#575757"/><rect x="146.83" y="50.50" width="9.8" height="9.8" fill="#b3b3b3"/><rect x="157.50" y="50.50" width="9.8" height="9.8" fill="#575757"/><rect x="168.17" y="50.50" width="9.8" height="9.8" fill="#b3b3b3"/><text x="181.64" y="68.90" font-size="7" fill="#8a8a8a" font-family="Liberation Sans">G</text><rect x="50.80" y="61.50" width="9.8" height="9.8" fill="#b3b3b3"/><rect x="61.47" y="61.50" width="9.8" height="9.8" fill="#b3b3b3"/><rect x="72.14" y="61.50" width="9.8" height="9.8" fill="#b3b3b3"/><rect x="82.81" y="61.50" width="9.8" height="9.8" fill="#b3b3b3"/><rect x="93.48" y="61.50" width="9.8" height="9.8" fill="#b3b3b3"/><rect x="104.15" y="61.50" width="9.8" height="9.8" fill="#b3b3b3"/><rect x="114.82" y="61.50" width="9.8" height="9.8" fill="#b3b3b3"/><rect x="125.79" y="61.10" width="9.60" height="11.40" fill="#eaa9a5"/><rect x="136.46" y="61.10" width="9.60" height="11.40" fill="#eaa9a5"/><rect x="146.83" y="61.50" width="9.8" height="9.8" fill="#b3b3b3"/><rect x="157.50" y="61.50" width="9.8" height="9.8" fill="#b3b3b3"/><rect x="168.17" y="61.50" width="9.8" height="9.8" fill="#b3b3b3"/><text x="181.64" y="79.90" font-size="7" fill="#8a8a8a" font-family="Liberation Sans">F#</text><rect x="50.80" y="72.50" width="9.8" height="9.8" fill="#b3b3b3"/><rect x="61.47" y="72.50" width="9.8" height="9.8" fill="#575757"/><rect x="72.14" y="72.50" width="9.8" height="9.8" fill="#b3b3b3"/><rect x="82.81" y="72.50" width="9.8" height="9.8" fill="#575757"/><rect x="93.48" y="72.50" width="9.8" height="9.8" fill="#b3b3b3"/><rect x="104.15" y="72.50" width="9.8" height="9.8" fill="#b3b3b3"/><rect x="114.82" y="72.50" width="9.8" height="9.8" fill="#575757"/><rect x="125.49" y="72.50" width="9.8" height="9.8" fill="#b3b3b3"/><rect x="136.16" y="72.50" width="9.8" height="9.8" fill="#575757"/><rect x="146.83" y="72.50" width="9.8" height="9.8" fill="#b3b3b3"/><rect x="157.50" y="72.50" width="9.8" height="9.8" fill="#575757"/><rect x="168.17" y="72.50" width="9.8" height="9.8" fill="#b3b3b3"/><text x="181.64" y="90.90" font-size="7" fill="#8a8a8a" font-family="Liberation Sans">F</text><rect x="50.80" y="83.50" width="9.8" height="9.8" fill="#b3b3b3"/><rect x="61.47" y="83.50" width="9.8" height="9.8" fill="#b3b3b3"/><rect x="72.14" y="83.50" width="9.8" height="9.8" fill="#b3b3b3"/><rect x="82.81" y="83.50" width="9.8" height="9.8" fill="#b3b3b3"/><rect x="93.48" y="83.50" width="9.8" height="9.8" fill="#b3b3b3"/><rect x="104.45" y="83.10" width="9.60" height="11.40" fill="#eaa9a5"/><rect x="115.12" y="83.10" width="9.60" height="11.40" fill="#eaa9a5"/><rect x="125.49" y="83.50" width="9.8" height="9.8" fill="#b3b3b3"/><rect x="136.16" y="83.50" width="9.8" height="9.8" fill="#b3b3b3"/><rect x="146.83" y="83.50" width="9.8" height="9.8" fill="#b3b3b3"/><rect x="157.50" y="83.50" width="9.8" height="9.8" fill="#b3b3b3"/><rect x="168.17" y="83.50" width="9.8" height="9.8" fill="#b3b3b3"/><text x="181.64" y="101.90" font-size="7" fill="#8a8a8a" font-family="Liberation Sans">E</text><rect x="50.80" y="94.50" width="9.8" height="9.8" fill="#b3b3b3"/><rect x="61.47" y="94.50" width="9.8" height="9.8" fill="#b3b3b3"/><rect x="72.14" y="94.50" width="9.8" height="9.8" fill="#b3b3b3"/><rect x="82.81" y="94.50" width="9.8" height="9.8" fill="#b3b3b3"/><rect x="93.78" y="94.10" width="9.60" height="11.40" fill="#eaa9a5"/><rect x="104.15" y="94.50" width="9.8" height="9.8" fill="#b3b3b3"/><rect x="114.82" y="94.50" width="9.8" height="9.8" fill="#b3b3b3"/><rect x="125.49" y="94.50" width="9.8" height="9.8" fill="#b3b3b3"/><rect x="136.16" y="94.50" width="9.8" height="9.8" fill="#b3b3b3"/><rect x="146.83" y="94.50" width="9.8" height="9.8" fill="#b3b3b3"/><rect x="157.50" y="94.50" width="9.8" height="9.8" fill="#b3b3b3"/><rect x="168.17" y="94.50" width="9.8" height="9.8" fill="#b3b3b3"/><text x="181.64" y="112.90" font-size="7" fill="#8a8a8a" font-family="Liberation Sans">D#</text><rect x="50.80" y="105.50" width="9.8" height="9.8" fill="#b3b3b3"/><rect x="61.47" y="105.50" width="9.8" height="9.8" fill="#575757"/><rect x="72.14" y="105.50" width="9.8" height="9.8" fill="#b3b3b3"/><rect x="82.81" y="105.50" width="9.8" height="9.8" fill="#575757"/><rect x="93.48" y="105.50" width="9.8" height="9.8" fill="#b3b3b3"/><rect x="104.15" y="105.50" width="9.8" height="9.8" fill="#b3b3b3"/><rect x="114.82" y="105.50" width="9.8" height="9.8" fill="#575757"/><rect x="125.49" y="105.50" width="9.8" height="9.8" fill="#b3b3b3"/><rect x="136.16" y="105.50" width="9.8" height="9.8" fill="#575757"/><rect x="146.83" y="105.50" width="9.8" height="9.8" fill="#b3b3b3"/><rect x="157.50" y="105.50" width="9.8" height="9.8" fill="#575757"/><rect x="168.17" y="105.50" width="9.8" height="9.8" fill="#b3b3b3"/><text x="181.64" y="123.90" font-size="7" fill="#8a8a8a" font-family="Liberation Sans">D</text><rect x="50.80" y="116.50" width="9.8" height="9.8" fill="#b3b3b3"/><rect x="61.47" y="116.50" width="9.8" height="9.8" fill="#b3b3b3"/><rect x="72.44" y="116.10" width="9.60" height="11.40" fill="#eaa9a5"/><rect x="83.11" y="116.10" width="9.60" height="11.40" fill="#eaa9a5"/><rect x="93.48" y="116.50" width="9.8" height="9.8" fill="#b3b3b3"/><rect x="104.15" y="116.50" width="9.8" height="9.8" fill="#b3b3b3"/><rect x="114.82" y="116.50" width="9.8" height="9.8" fill="#b3b3b3"/><rect x="125.49" y="116.50" width="9.8" height="9.8" fill="#b3b3b3"/><rect x="136.16" y="116.50" width="9.8" height="9.8" fill="#b3b3b3"/><rect x="146.83" y="116.50" width="9.8" height="9.8" fill="#b3b3b3"/><rect x="157.50" y="116.50" width="9.8" height="9.8" fill="#b3b3b3"/><rect x="168.17" y="116.50" width="9.8" height="9.8" fill="#b3b3b3"/><text x="181.64" y="134.90" font-size="7" fill="#8a8a8a" font-family="Liberation Sans">C#</text><rect x="50.80" y="127.50" width="9.8" height="9.8" fill="#b3b3b3"/><rect x="61.47" y="127.50" width="9.8" height="9.8" fill="#575757"/><rect x="72.14" y="127.50" width="9.8" height="9.8" fill="#b3b3b3"/><rect x="82.81" y="127.50" width="9.8" height="9.8" fill="#575757"/><rect x="93.48" y="127.50" width="9.8" height="9.8" fill="#b3b3b3"/><rect x="104.15" y="127.50" width="9.8" height="9.8" fill="#b3b3b3"/><rect x="114.82" y="127.50" width="9.8" height="9.8" fill="#575757"/><rect x="125.49" y="127.50" width="9.8" height="9.8" fill="#b3b3b3"/><rect x="136.16" y="127.50" width="9.8" height="9.8" fill="#575757"/><rect x="146.83" y="127.50" width="9.8" height="9.8" fill="#b3b3b3"/><rect x="157.50" y="127.50" width="9.8" height="9.8" fill="#575757"/><rect x="168.17" y="127.50" width="9.8" height="9.8" fill="#b3b3b3"/><text x="181.64" y="145.90" font-size="7" fill="#8a8a8a" font-family="Liberation Sans">C</text><rect x="51.10" y="138.10" width="9.60" height="11.40" fill="#eaa9a5"/><rect x="61.77" y="138.10" width="9.60" height="11.40" fill="#eaa9a5"/><rect x="72.14" y="138.50" width="9.8" height="9.8" fill="#b3b3b3"/><rect x="82.81" y="138.50" width="9.8" height="9.8" fill="#b3b3b3"/><rect x="93.48" y="138.50" width="9.8" height="9.8" fill="#b3b3b3"/><rect x="104.15" y="138.50" width="9.8" height="9.8" fill="#b3b3b3"/><rect x="114.82" y="138.50" width="9.8" height="9.8" fill="#b3b3b3"/><rect x="125.49" y="138.50" width="9.8" height="9.8" fill="#b3b3b3"/><rect x="136.16" y="138.50" width="9.8" height="9.8" fill="#b3b3b3"/><rect x="146.83" y="138.50" width="9.8" height="9.8" fill="#b3b3b3"/><rect x="157.50" y="138.50" width="9.8" height="9.8" fill="#b3b3b3"/><rect x="168.17" y="138.50" width="9.8" height="9.8" fill="#b3b3b3"/></svg>
<svg width="1200" height="899" style="left:0;top:0"><path d="M904.30,756.70 A18,18 0 0 1 888.71,729.70" stroke="#a3a8a6" stroke-width="4" fill="none"/><path d="M895.03,723.27 A18,18 0 0 1 922.30,738.70" stroke="#a3a8a6" stroke-width="4" fill="none"/><polygon points="889.3,716.9 879.8,724 889.3,724" fill="#eaa9a5"/></svg>
<div class="t" style="left:713.80px;top:740.92px;width:400px;text-align:center;font-size:19px;line-height:23px;color:#e6e6e6;">0</div>
<div class="r" style="left:614px;top:783px;width:35px;height:30px;background:#c0c0c0;border-radius:4px;"></div>
<div class="t" style="left:431.59px;top:786.74px;width:400px;text-align:center;font-size:19.5px;line-height:23px;color:#3d3d3d;letter-spacing:0.175px;">-48</div>
<div class="r" style="left:654px;top:783px;width:35px;height:30px;background:#c0c0c0;border-radius:4px;"></div>
<div class="t" style="left:471.59px;top:786.74px;width:400px;text-align:center;font-size:19.5px;line-height:23px;color:#3d3d3d;letter-spacing:0.175px;">-36</div>
<div class="r" style="left:694px;top:783px;width:35px;height:30px;background:#c0c0c0;border-radius:4px;"></div>
<div class="t" style="left:511.59px;top:786.74px;width:400px;text-align:center;font-size:19.5px;line-height:23px;color:#3d3d3d;letter-spacing:0.175px;">-24</div>
<div class="r" style="left:734px;top:783px;width:35px;height:30px;background:#c0c0c0;border-radius:4px;"></div>
<div class="t" style="left:551.59px;top:786.74px;width:400px;text-align:center;font-size:19.5px;line-height:23px;color:#3d3d3d;letter-spacing:0.175px;">-12</div>
<div class="r" style="left:774px;top:783px;width:35px;height:30px;background:#eaa9a5;border-radius:4px;"></div>
<div class="t" style="left:591.50px;top:786.74px;width:400px;text-align:center;font-size:19.5px;line-height:23px;color:#3d3d3d;">0</div>
<div class="r" style="left:814px;top:783px;width:35px;height:30px;background:#c0c0c0;border-radius:4px;"></div>
<div class="t" style="left:631.02px;top:786.74px;width:400px;text-align:center;font-size:19.5px;line-height:23px;color:#3d3d3d;letter-spacing:-0.950px;">12</div>
<div class="r" style="left:854px;top:783px;width:35px;height:30px;background:#c0c0c0;border-radius:4px;"></div>
<div class="t" style="left:671.02px;top:786.74px;width:400px;text-align:center;font-size:19.5px;line-height:23px;color:#3d3d3d;letter-spacing:-0.950px;">24</div>
<div class="r" style="left:894px;top:783px;width:35px;height:30px;background:#c0c0c0;border-radius:4px;"></div>
<div class="t" style="left:711.02px;top:786.74px;width:400px;text-align:center;font-size:19.5px;line-height:23px;color:#3d3d3d;letter-spacing:-0.950px;">36</div>
<div class="r" style="left:934px;top:783px;width:35px;height:30px;background:#c0c0c0;border-radius:4px;"></div>
<div class="t" style="left:751.02px;top:786.74px;width:400px;text-align:center;font-size:19.5px;line-height:23px;color:#3d3d3d;letter-spacing:-0.950px;">48</div>
<div class="r" style="left:619.5px;top:839px;width:360px;height:32px;background:linear-gradient(#a9a9a9,#a5a5a5);border-radius:4px;"></div>
<div class="t" style="left:599.80px;top:845.22px;width:400px;text-align:center;font-size:19px;line-height:23px;color:#000;">3</div>
<div class="r" style="left:1002px;top:469px;width:384px;height:386px;background:#4a4a4a;border-radius:8px;"></div>
<div class="r" style="left:1012px;top:481px;width:154px;height:22px;background:#ffffff;border-radius:4px;"></div>
<div class="t" style="left:888.33px;top:481.79px;width:400px;text-align:center;font-size:18.5px;line-height:22px;color:#000;letter-spacing:-1.350px;">ON</div>
<div class="r" style="left:1176px;top:479px;width:90px;height:26px;background:#474747;border-radius:0px;"></div>
<div class="r" style="left:1178px;top:481px;width:86px;height:22px;background:#f2dc9d;border-radius:0px;"></div>
<div class="t" style="left:1021.00px;top:481.79px;width:400px;text-align:center;font-size:18.5px;line-height:22px;color:#000;">C6</div>
<div class="r" style="left:1268px;top:479px;width:90px;height:26px;background:#474747;border-radius:0px;"></div>
<div class="r" style="left:1270px;top:481px;width:86px;height:22px;background:#f2dc9d;border-radius:0px;"></div>
<div class="t" style="left:1113.00px;top:481.79px;width:400px;text-align:center;font-size:18.5px;line-height:22px;color:#000;">G8</div>
<div class="r" style="left:1012px;top:529px;width:68px;height:30px;background:#a5a8a7;border-radius:4px;"></div>
<div class="t" style="left:845.95px;top:533.39px;width:400px;text-align:center;font-size:18.5px;line-height:22px;color:#000;letter-spacing:-0.100px;">All</div>
<div class="r" style="left:1094px;top:531px;width:54px;height:26px;background:#474747;border-radius:0px;"></div>
<div class="r" style="left:1096px;top:533px;width:50px;height:22px;background:#c4c4c4;border-radius:0px;"></div>
<div class="t" style="left:1098.20px;top:533.56px;width:600px;text-align:left;font-size:18px;line-height:22px;color:#000;">C</div>
<div class="r" style="left:1152px;top:531px;width:196px;height:26px;background:#474747;border-radius:0px;"></div>
<div class="r" style="left:1154px;top:533px;width:192px;height:22px;background:#c4c4c4;border-radius:0px;"></div>
<div class="t" style="left:1157.00px;top:533.56px;width:600px;text-align:left;font-size:18px;line-height:22px;color:#000;letter-spacing:0.325px;">Major</div>
<svg width="400" height="30" style="left:1004px;top:530px"><polygon points="125.3,9 139,9 132.15,18.3" fill="#000"/><polygon points="325,9.3 338.7,9.3 331.85,18.5" fill="#000"/></svg>
<div class="r" style="left:1352px;top:531px;width:27px;height:26px;background:#a7abaa;border-radius:6px;"></div>
<div class="t" style="left:1165.25px;top:533.29px;width:400px;text-align:center;font-size:18.5px;line-height:22px;color:#626262;letter-spacing:-0.500px;">lin</div>
<div class="r" style="left:1012px;top:588px;width:66px;height:34px;background:#b1b1b1;border-radius:5px;"></div>
<div class="t" style="left:845.00px;top:592.92px;width:400px;text-align:center;font-size:19px;line-height:23px;color:#000;transform:scaleX(1.152);">off</div>
<div class="r" style="left:1086px;top:588px;width:66px;height:34px;background:#87dcfd;border-radius:5px;"></div>
<div class="t" style="left:918.79px;top:592.92px;width:400px;text-align:center;font-size:19px;line-height:23px;color:#000;letter-spacing:-0.412px;">scale</div>
<div class="r" style="left:1160px;top:588px;width:66px;height:34px;background:#b1b1b1;border-radius:5px;"></div>
<div class="t" style="left:993.15px;top:592.92px;width:400px;text-align:center;font-size:19px;line-height:23px;color:#000;letter-spacing:0.300px;">chord</div>
<div class="r" style="left:1242px;top:587px;width:120px;height:34px;background:#dcdde0;border-radius:5px;"></div>
<div class="t" style="left:1101.84px;top:592.92px;width:400px;text-align:center;font-size:19px;line-height:23px;color:#3c414a;letter-spacing:-0.312px;">learn</div>
<div class="r" style="left:1242px;top:627px;width:120px;height:24px;background:#d0d0d0;border-radius:5px;"></div>
<div class="t" style="left:1102.20px;top:626.62px;width:400px;text-align:center;font-size:19px;line-height:23px;color:#3c414a;letter-spacing:0.400px;">instant</div>
<div class="r" style="left:1242px;top:673px;width:120px;height:22px;background:#d9d9d9;border-radius:5px;"></div>
<div class="t" style="left:1102.12px;top:672.72px;width:400px;text-align:center;font-size:19px;line-height:23px;color:#000;letter-spacing:0.242px;">pitched</div>
<svg width="400" height="160" style="left:1002px;top:620px"><text x="55.70" y="13.6" font-size="7" fill="#8a8a8a" text-anchor="middle" font-family="Liberation Sans">C</text><text x="66.37" y="13.6" font-size="7" fill="#8a8a8a" text-anchor="middle" font-family="Liberation Sans">C#</text><text x="77.04" y="13.6" font-size="7" fill="#8a8a8a" text-anchor="middle" font-family="Liberation Sans">D</text><text x="87.71" y="13.6" font-size="7" fill="#8a8a8a" text-anchor="middle" font-family="Liberation Sans">D#</text><text x="98.38" y="13.6" font-size="7" fill="#8a8a8a" text-anchor="middle" font-family="Liberation Sans">E</text><text x="109.05" y="13.6" font-size="7" fill="#8a8a8a" text-anchor="middle" font-family="Liberation Sans">F</text><text x="119.72" y="13.6" font-size="7" fill="#8a8a8a" text-anchor="middle" font-family="Liberation Sans">F#</text><text x="130.39" y="13.6" font-size="7" fill="#8a8a8a" text-anchor="middle" font-family="Liberation Sans">G</text><text x="141.06" y="13.6" font-size="7" fill="#8a8a8a" text-anchor="middle" font-family="Liberation Sans">G#</text><text x="151.73" y="13.6" font-size="7" fill="#8a8a8a" text-anchor="middle" font-family="Liberation Sans">A</text><text x="162.40" y="13.6" font-size="7" fill="#8a8a8a" text-anchor="middle" font-family="Liberation Sans">A#</text><text x="173.07" y="13.6" font-size="7" fill="#8a8a8a" text-anchor="middle" font-family="Liberation Sans">B</text><text x="181.64" y="24.90" font-size="7" fill="#8a8a8a" font-family="Liberation Sans">B</text><rect x="50.80" y="17.50" width="9.8" height="9.8" fill="#b3b3b3"/><rect x="61.47" y="17.50" width="9.8" height="9.8" fill="#b3b3b3"/><rect x="72.14" y="17.50" width="9.8" height="9.8" fill="#b3b3b3"/><rect x="82.81" y="17.50" width="9.8" height="9.8" fill="#b3b3b3"/><rect x="93.48" y="17.50" width="9.8" height="9.8" fill="#b3b3b3"/><rect x="104.15" y="17.50" width="9.8" height="9.8" fill="#b3b3b3"/><rect x="114.82" y="17.50" width="9.8" height="9.8" fill="#b3b3b3"/><rect x="125.49" y="17.50" width="9.8" height="9.8" fill="#b3b3b3"/><rect x="136.16" y="17.50" width="9.8" height="9.8" fill="#b3b3b3"/><rect x="146.83" y="17.50" width="9.8" height="9.8" fill="#b3b3b3"/><rect x="157.50" y="17.50" width="9.8" height="9.8" fill="#b3b3b3"/><rect x="168.47" y="17.10" width="9.60" height="11.40" fill="#f2dc9d"/><text x="181.64" y="35.90" font-size="7" fill="#8a8a8a" font-family="Liberation Sans">A#</text><rect x="50.80" y="28.50" width="9.8" height="9.8" fill="#b3b3b3"/><rect x="61.47" y="28.50" width="9.8" height="9.8" fill="#575757"/><rect x="72.14" y="28.50" width="9.8" height="9.8" fill="#b3b3b3"/><rect x="82.81" y="28.50" width="9.8" height="9.8" fill="#575757"/><rect x="93.48" y="28.50" width="9.8" height="9.8" fill="#b3b3b3"/><rect x="104.15" y="28.50" width="9.8" height="9.8" fill="#b3b3b3"/><rect x="114.82" y="28.50" width="9.8" height="9.8" fill="#575757"/><rect x="125.49" y="28.50" width="9.8" height="9.8" fill="#b3b3b3"/><rect x="136.16" y="28.50" width="9.8" height="9.8" fill="#575757"/><rect x="146.83" y="28.50" width="9.8" height="9.8" fill="#b3b3b3"/><rect x="157.50" y="28.50" width="9.8" height="9.8" fill="#575757"/><rect x="168.17" y="28.50" width="9.8" height="9.8" fill="#b3b3b3"/><text x="181.64" y="46.90" font-size="7" fill="#8a8a8a" font-family="Liberation Sans">A</text><rect x="50.80" y="39.50" width="9.8" height="9.8" fill="#b3b3b3"/><rect x="61.47" y="39.50" width="9.8" height="9.8" fill="#b3b3b3"/><rect x="72.14" y="39.50" width="9.8" height="9.8" fill="#b3b3b3"/><rect x="82.81" y="39.50" width="9.8" height="9.8" fill="#b3b3b3"/><rect x="93.48" y="39.50" width="9.8" height="9.8" fill="#b3b3b3"/><rect x="104.15" y="39.50" width="9.8" height="9.8" fill="#b3b3b3"/><rect x="114.82" y="39.50" width="9.8" height="9.8" fill="#b3b3b3"/><rect x="125.49" y="39.50" width="9.8" height="9.8" fill="#b3b3b3"/><rect x="136.16" y="39.50" width="9.8" height="9.8" fill="#b3b3b3"/><rect x="147.13" y="39.10" width="9.60" height="11.40" fill="#f2dc9d"/><rect x="157.80" y="39.10" width="9.60" height="11.40" fill="#f2dc9d"/><rect x="168.17" y="39.50" width="9.8" height="9.8" fill="#b3b3b3"/><text x="181.64" y="57.90" font-size="7" fill="#8a8a8a" font-family="Liberation Sans">G#</text><rect x="50.80" y="50.50" width="9.8" height="9.8" fill="#b3b3b3"/><rect x="61.47" y="50.50" width="9.8" height="9.8" fill="#575757"/><rect x="72.14" y="50.50" width="9.8" height="9.8" fill="#b3b3b3"/><rect x="82.81" y="50.50" width="9.8" height="9.8" fill="#575757"/><rect x="93.48" y="50.50" width="9.8" height="9.8" fill="#b3b3b3"/><rect x="104.15" y="50.50" width="9.8" height="9.8" fill="#b3b3b3"/><rect x="114.82" y="50.50" width="9.8" height="9.8" fill="#575757"/><rect x="125.49" y="50.50" width="9.8" height="9.8" fill="#b3b3b3"/><rect x="136.16" y="50.50" width="9.8" height="9.8" fill="#575757"/><rect x="146.83" y="50.50" width="9.8" height="9.8" fill="#b3b3b3"/><rect x="157.50" y="50.50" width="9.8" height="9.8" fill="#575757"/><rect x="168.17" y="50.50" width="9.8" height="9.8" fill="#b3b3b3"/><text x="181.64" y="68.90" font-size="7" fill="#8a8a8a" font-family="Liberation Sans">G</text><rect x="50.80" y="61.50" width="9.8" height="9.8" fill="#b3b3b3"/><rect x="61.47" y="61.50" width="9.8" height="9.8" fill="#b3b3b3"/><rect x="72.14" y="61.50" width="9.8" height="9.8" fill="#b3b3b3"/><rect x="82.81" y="61.50" width="9.8" height="9.8" fill="#b3b3b3"/><rect x="93.48" y="61.50" width="9.8" height="9.8" fill="#b3b3b3"/><rect x="104.15" y="61.50" width="9.8" height="9.8" fill="#b3b3b3"/><rect x="114.82" y="61.50" width="9.8" height="9.8" fill="#b3b3b3"/><rect x="125.79" y="61.10" width="9.60" height="11.40" fill="#f2dc9d"/><rect x="136.46" y="61.10" width="9.60" height="11.40" fill="#f2dc9d"/><rect x="146.83" y="61.50" width="9.8" height="9.8" fill="#b3b3b3"/><rect x="157.50" y="61.50" width="9.8" height="9.8" fill="#b3b3b3"/><rect x="168.17" y="61.50" width="9.8" height="9.8" fill="#b3b3b3"/><text x="181.64" y="79.90" font-size="7" fill="#8a8a8a" font-family="Liberation Sans">F#</text><rect x="50.80" y="72.50" width="9.8" height="9.8" fill="#b3b3b3"/><rect x="61.47" y="72.50" width="9.8" height="9.8" fill="#575757"/><rect x="72.14" y="72.50" width="9.8" height="9.8" fill="#b3b3b3"/><rect x="82.81" y="72.50" width="9.8" height="9.8" fill="#575757"/><rect x="93.48" y="72.50" width="9.8" height="9.8" fill="#b3b3b3"/><rect x="104.15" y="72.50" width="9.8" height="9.8" fill="#b3b3b3"/><rect x="114.82" y="72.50" width="9.8" height="9.8" fill="#575757"/><rect x="125.49" y="72.50" width="9.8" height="9.8" fill="#b3b3b3"/><rect x="136.16" y="72.50" width="9.8" height="9.8" fill="#575757"/><rect x="146.83" y="72.50" width="9.8" height="9.8" fill="#b3b3b3"/><rect x="157.50" y="72.50" width="9.8" height="9.8" fill="#575757"/><rect x="168.17" y="72.50" width="9.8" height="9.8" fill="#b3b3b3"/><text x="181.64" y="90.90" font-size="7" fill="#8a8a8a" font-family="Liberation Sans">F</text><rect x="50.80" y="83.50" width="9.8" height="9.8" fill="#b3b3b3"/><rect x="61.47" y="83.50" width="9.8" height="9.8" fill="#b3b3b3"/><rect x="72.14" y="83.50" width="9.8" height="9.8" fill="#b3b3b3"/><rect x="82.81" y="83.50" width="9.8" height="9.8" fill="#b3b3b3"/><rect x="93.48" y="83.50" width="9.8" height="9.8" fill="#b3b3b3"/><rect x="104.45" y="83.10" width="9.60" height="11.40" fill="#f2dc9d"/><rect x="115.12" y="83.10" width="9.60" height="11.40" fill="#f2dc9d"/><rect x="125.49" y="83.50" width="9.8" height="9.8" fill="#b3b3b3"/><rect x="136.16" y="83.50" width="9.8" height="9.8" fill="#b3b3b3"/><rect x="146.83" y="83.50" width="9.8" height="9.8" fill="#b3b3b3"/><rect x="157.50" y="83.50" width="9.8" height="9.8" fill="#b3b3b3"/><rect x="168.17" y="83.50" width="9.8" height="9.8" fill="#b3b3b3"/><text x="181.64" y="101.90" font-size="7" fill="#8a8a8a" font-family="Liberation Sans">E</text><rect x="50.80" y="94.50" width="9.8" height="9.8" fill="#b3b3b3"/><rect x="61.47" y="94.50" width="9.8" height="9.8" fill="#b3b3b3"/><rect x="72.14" y="94.50" width="9.8" height="9.8" fill="#b3b3b3"/><rect x="82.81" y="94.50" width="9.8" height="9.8" fill="#b3b3b3"/><rect x="93.78" y="94.10" width="9.60" height="11.40" fill="#f2dc9d"/><rect x="104.15" y="94.50" width="9.8" height="9.8" fill="#b3b3b3"/><rect x="114.82" y="94.50" width="9.8" height="9.8" fill="#b3b3b3"/><rect x="125.49" y="94.50" width="9.8" height="9.8" fill="#b3b3b3"/><rect x="136.16" y="94.50" width="9.8" height="9.8" fill="#b3b3b3"/><rect x="146.83" y="94.50" width="9.8" height="9.8" fill="#b3b3b3"/><rect x="157.50" y="94.50" width="9.8" height="9.8" fill="#b3b3b3"/><rect x="168.17" y="94.50" width="9.8" height="9.8" fill="#b3b3b3"/><text x="181.64" y="112.90" font-size="7" fill="#8a8a8a" font-family="Liberation Sans">D#</text><rect x="50.80" y="105.50" width="9.8" height="9.8" fill="#b3b3b3"/><rect x="61.47" y="105.50" width="9.8" height="9.8" fill="#575757"/><rect x="72.14" y="105.50" width="9.8" height="9.8" fill="#b3b3b3"/><rect x="82.81" y="105.50" width="9.8" height="9.8" fill="#575757"/><rect x="93.48" y="105.50" width="9.8" height="9.8" fill="#b3b3b3"/><rect x="104.15" y="105.50" width="9.8" height="9.8" fill="#b3b3b3"/><rect x="114.82" y="105.50" width="9.8" height="9.8" fill="#575757"/><rect x="125.49" y="105.50" width="9.8" height="9.8" fill="#b3b3b3"/><rect x="136.16" y="105.50" width="9.8" height="9.8" fill="#575757"/><rect x="146.83" y="105.50" width="9.8" height="9.8" fill="#b3b3b3"/><rect x="157.50" y="105.50" width="9.8" height="9.8" fill="#575757"/><rect x="168.17" y="105.50" width="9.8" height="9.8" fill="#b3b3b3"/><text x="181.64" y="123.90" font-size="7" fill="#8a8a8a" font-family="Liberation Sans">D</text><rect x="50.80" y="116.50" width="9.8" height="9.8" fill="#b3b3b3"/><rect x="61.47" y="116.50" width="9.8" height="9.8" fill="#b3b3b3"/><rect x="72.44" y="116.10" width="9.60" height="11.40" fill="#f2dc9d"/><rect x="83.11" y="116.10" width="9.60" height="11.40" fill="#f2dc9d"/><rect x="93.48" y="116.50" width="9.8" height="9.8" fill="#b3b3b3"/><rect x="104.15" y="116.50" width="9.8" height="9.8" fill="#b3b3b3"/><rect x="114.82" y="116.50" width="9.8" height="9.8" fill="#b3b3b3"/><rect x="125.49" y="116.50" width="9.8" height="9.8" fill="#b3b3b3"/><rect x="136.16" y="116.50" width="9.8" height="9.8" fill="#b3b3b3"/><rect x="146.83" y="116.50" width="9.8" height="9.8" fill="#b3b3b3"/><rect x="157.50" y="116.50" width="9.8" height="9.8" fill="#b3b3b3"/><rect x="168.17" y="116.50" width="9.8" height="9.8" fill="#b3b3b3"/><text x="181.64" y="134.90" font-size="7" fill="#8a8a8a" font-family="Liberation Sans">C#</text><rect x="50.80" y="127.50" width="9.8" height="9.8" fill="#b3b3b3"/><rect x="61.47" y="127.50" width="9.8" height="9.8" fill="#575757"/><rect x="72.14" y="127.50" width="9.8" height="9.8" fill="#b3b3b3"/><rect x="82.81" y="127.50" width="9.8" height="9.8" fill="#575757"/><rect x="93.48" y="127.50" width="9.8" height="9.8" fill="#b3b3b3"/><rect x="104.15" y="127.50" width="9.8" height="9.8" fill="#b3b3b3"/><rect x="114.82" y="127.50" width="9.8" height="9.8" fill="#575757"/><rect x="125.49" y="127.50" width="9.8" height="9.8" fill="#b3b3b3"/><rect x="136.16" y="127.50" width="9.8" height="9.8" fill="#575757"/><rect x="146.83" y="127.50" width="9.8" height="9.8" fill="#b3b3b3"/><rect x="157.50" y="127.50" width="9.8" height="9.8" fill="#575757"/><rect x="168.17" y="127.50" width="9.8" height="9.8" fill="#b3b3b3"/><text x="181.64" y="145.90" font-size="7" fill="#8a8a8a" font-family="Liberation Sans">C</text><rect x="51.10" y="138.10" width="9.60" height="11.40" fill="#f2dc9d"/><rect x="61.77" y="138.10" width="9.60" height="11.40" fill="#f2dc9d"/><rect x="72.14" y="138.50" width="9.8" height="9.8" fill="#b3b3b3"/><rect x="82.81" y="138.50" width="9.8" height="9.8" fill="#b3b3b3"/><rect x="93.48" y="138.50" width="9.8" height="9.8" fill="#b3b3b3"/><rect x="104.15" y="138.50" width="9.8" height="9.8" fill="#b3b3b3"/><rect x="114.82" y="138.50" width="9.8" height="9.8" fill="#b3b3b3"/><rect x="125.49" y="138.50" width="9.8" height="9.8" fill="#b3b3b3"/><rect x="136.16" y="138.50" width="9.8" height="9.8" fill="#b3b3b3"/><rect x="146.83" y="138.50" width="9.8" height="9.8" fill="#b3b3b3"/><rect x="157.50" y="138.50" width="9.8" height="9.8" fill="#b3b3b3"/><rect x="168.17" y="138.50" width="9.8" height="9.8" fill="#b3b3b3"/></svg>
<svg width="1200" height="899" style="left:0;top:0"><path d="M1300.30,756.70 A18,18 0 0 1 1284.71,729.70" stroke="#a3a8a6" stroke-width="4" fill="none"/><path d="M1291.03,723.27 A18,18 0 0 1 1318.30,738.70" stroke="#a3a8a6" stroke-width="4" fill="none"/><polygon points="1285.3,716.9 1275.8,724 1285.3,724" fill="#f2dc9d"/></svg>
<div class="t" style="left:1109.80px;top:740.92px;width:400px;text-align:center;font-size:19px;line-height:23px;color:#e6e6e6;">0</div>
<div class="r" style="left:1010px;top:783px;width:35px;height:30px;background:#c0c0c0;border-radius:4px;"></div>
<div class="t" style="left:827.59px;top:786.74px;width:400px;text-align:center;font-size:19.5px;line-height:23px;color:#3d3d3d;letter-spacing:0.175px;">-48</div>
<div class="r" style="left:1050px;top:783px;width:35px;height:30px;background:#c0c0c0;border-radius:4px;"></div>
<div class="t" style="left:867.59px;top:786.74px;width:400px;text-align:center;font-size:19.5px;line-height:23px;color:#3d3d3d;letter-spacing:0.175px;">-36</div>
<div class="r" style="left:1090px;top:783px;width:35px;height:30px;background:#c0c0c0;border-radius:4px;"></div>
<div class="t" style="left:907.59px;top:786.74px;width:400px;text-align:center;font-size:19.5px;line-height:23px;color:#3d3d3d;letter-spacing:0.175px;">-24</div>
<div class="r" style="left:1130px;top:783px;width:35px;height:30px;background:#c0c0c0;border-radius:4px;"></div>
<div class="t" style="left:947.59px;top:786.74px;width:400px;text-align:center;font-size:19.5px;line-height:23px;color:#3d3d3d;letter-spacing:0.175px;">-12</div>
<div class="r" style="left:1170px;top:783px;width:35px;height:30px;background:#f2dc9d;border-radius:4px;"></div>
<div class="t" style="left:987.50px;top:786.74px;width:400px;text-align:center;font-size:19.5px;line-height:23px;color:#3d3d3d;">0</div>
<div class="r" style="left:1210px;top:783px;width:35px;height:30px;background:#c0c0c0;border-radius:4px;"></div>
<div class="t" style="left:1027.03px;top:786.74px;width:400px;text-align:center;font-size:19.5px;line-height:23px;color:#3d3d3d;letter-spacing:-0.950px;">12</div>
<div class="r" style="left:1250px;top:783px;width:35px;height:30px;background:#c0c0c0;border-radius:4px;"></div>
<div class="t" style="left:1067.03px;top:786.74px;width:400px;text-align:center;font-size:19.5px;line-height:23px;color:#3d3d3d;letter-spacing:-0.950px;">24</div>
<div class="r" style="left:1290px;top:783px;width:35px;height:30px;background:#c0c0c0;border-radius:4px;"></div>
<div class="t" style="left:1107.03px;top:786.74px;width:400px;text-align:center;font-size:19.5px;line-height:23px;color:#3d3d3d;letter-spacing:-0.950px;">36</div>
<div class="r" style="left:1330px;top:783px;width:35px;height:30px;background:#c0c0c0;border-radius:4px;"></div>
<div class="t" style="left:1147.03px;top:786.74px;width:400px;text-align:center;font-size:19.5px;line-height:23px;color:#3d3d3d;letter-spacing:-0.950px;">48</div>
<div class="r" style="left:1017.0px;top:839px;width:360px;height:32px;background:linear-gradient(#a9a9a9,#a5a5a5);border-radius:4px;"></div>
<div class="t" style="left:997.30px;top:845.22px;width:400px;text-align:center;font-size:19px;line-height:23px;color:#000;">4</div>
</div></body></html>
